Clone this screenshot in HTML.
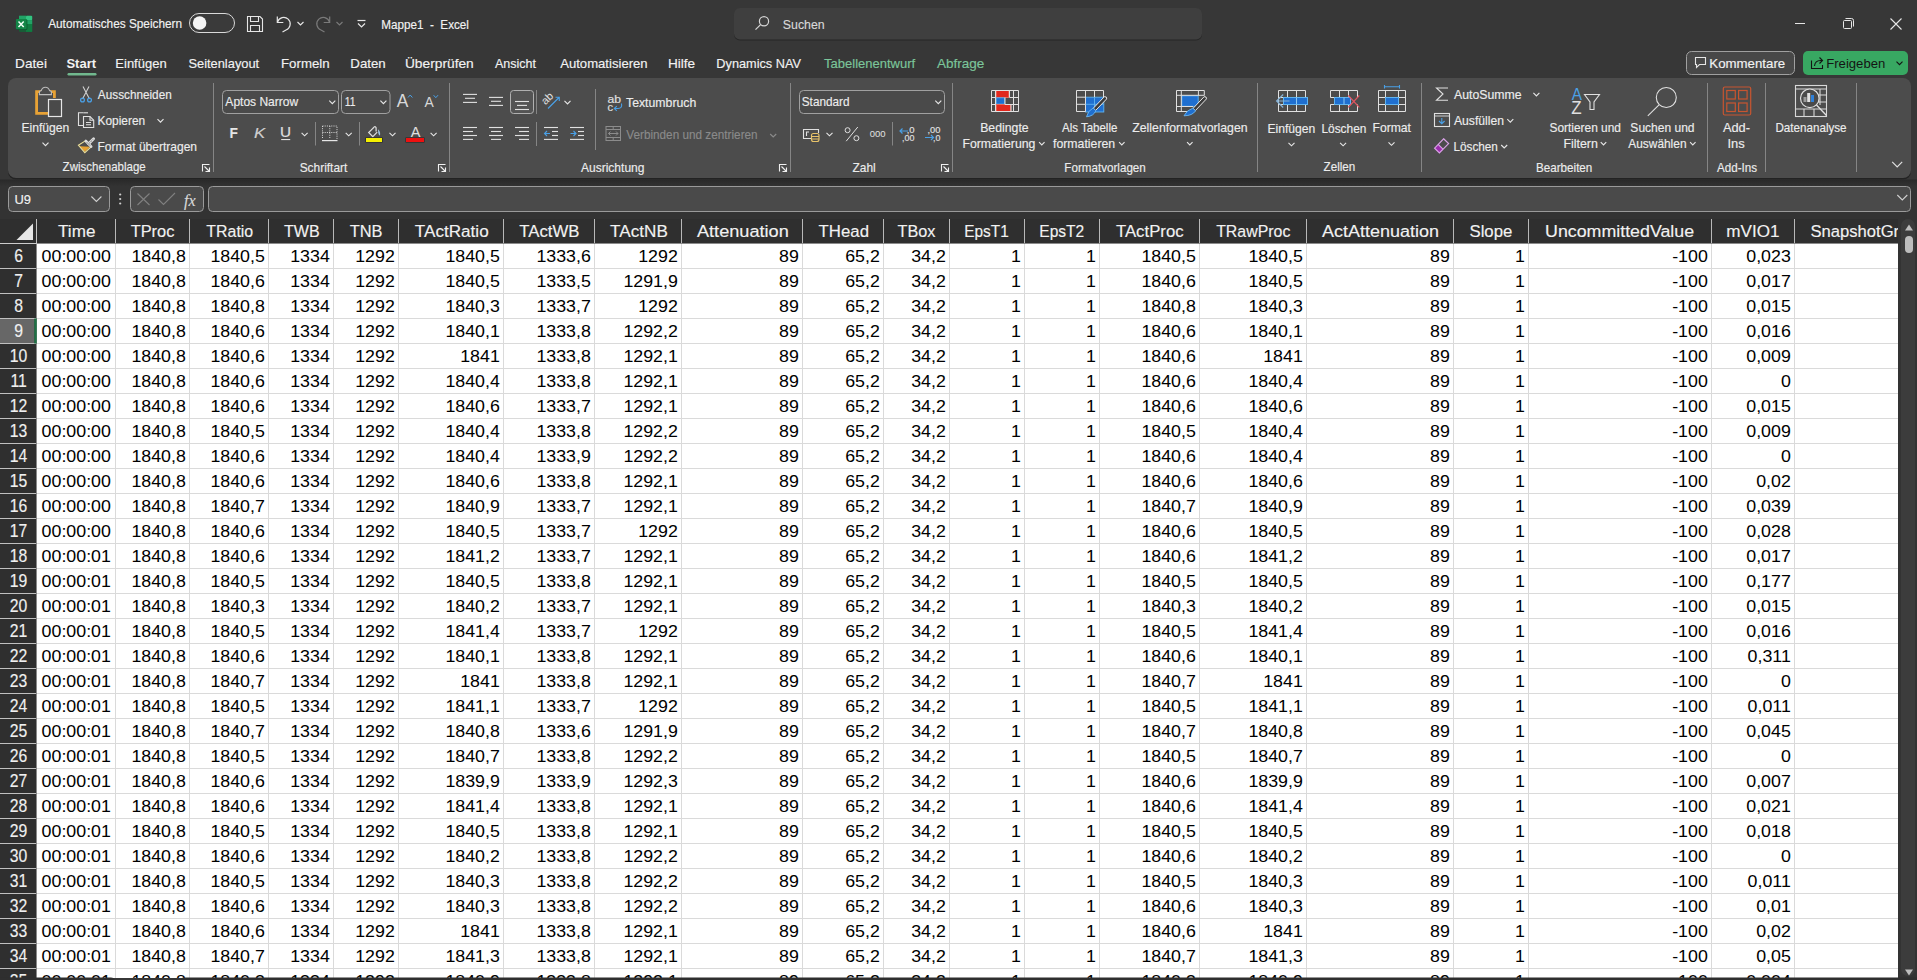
<!DOCTYPE html>
<html><head><meta charset="utf-8"><title>Mappe1 - Excel</title>
<style>
html,body{margin:0;padding:0;background:#373737;overflow:hidden;}
body{width:1917px;height:980px;position:relative;font-family:'Liberation Sans', sans-serif;}
svg{position:absolute;left:0;top:0;display:block;font-family:'Liberation Sans', sans-serif;}
</style></head><body>
<svg width="1917" height="980" viewBox="0 0 1917 980">
<defs><clipPath id="gclip"><rect x="0" y="219" width="1898" height="759"/></clipPath></defs>
<rect x="0" y="0" width="1917" height="980" fill="#373737" />
<rect x="8" y="79.5" width="1903" height="100" fill="#232323" rx="8"/>
<rect x="8" y="78" width="1903" height="100" fill="#4c4c4c" rx="8"/>
<defs><linearGradient id="fbg" x1="0" y1="0" x2="0" y2="1"><stop offset="0" stop-color="#292929"/><stop offset="1" stop-color="#333333"/></linearGradient></defs>
<rect x="0" y="180" width="1917" height="39" fill="#333333" />
<rect x="0" y="179.5" width="1917" height="7" fill="url(#fbg)" />
<rect x="0" y="219" width="1898" height="25" fill="#2f2f2f" />
<rect x="0" y="244" width="37" height="736" fill="#2f2f2f" />
<rect x="37" y="244" width="1861" height="734" fill="#ffffff" />
<rect x="1898" y="219" width="19" height="759" fill="#333333" />
<rect x="1901" y="219" width="14" height="757" fill="#3c3c3c" rx="7"/>
<path d="M1905 230.5 L1909 224.5 L1913 230.5 Z" fill="#bdbdbd"/>
<rect x="1905" y="236" width="8" height="17" fill="#bdbdbd" rx="4"/>
<path d="M1905 969.5 L1909 975.5 L1913 969.5 Z" fill="#bdbdbd"/>
<g><rect x="19" y="15.7" width="13.2" height="16.2" rx="1.2" fill="#185c37"/><rect x="19" y="15.7" width="7.2" height="4.5" fill="#21a366"/><rect x="26" y="15.7" width="6.2" height="4.5" rx="1" fill="#33c481"/><rect x="26" y="20.1" width="6.2" height="4" fill="#21a366"/><rect x="26" y="24" width="6.2" height="7.9" fill="#107c41"/><rect x="16.3" y="19.5" width="11" height="10.3" rx="1" fill="#0a4f29"/><rect x="15.9" y="19.1" width="10.8" height="10.1" rx="1" fill="#138547"/><path d="M18.5 21.4 L23.7 26.9 M23.7 21.4 L18.5 26.9" stroke="#f4fff8" stroke-width="1.5"/></g>
<text transform="matrix(0.91 0 0 1 48.17 27.9)" font-size="13" fill="#f2f2f2" stroke="#f2f2f2" stroke-width="0.15" >Automatisches Speichern</text>
<rect x="189.5" y="13.5" width="45" height="19" rx="9.5" fill="#3a3a3a" stroke="#d9d9d9" stroke-width="1"/>
<circle cx="199.6" cy="23" r="6.8" fill="#f4f4f4"/>
<g fill="none" stroke="#e6e6e6" stroke-width="1.1"><path d="M247.5 16.5 H260 L262.5 19 V31.5 H247.5 Z"/><path d="M250.5 16.5 V21.5 H258.5 V16.5"/><path d="M250.5 31.5 V25.5 H259.5 V31.5"/></g>
<g fill="none" stroke="#e6e6e6" stroke-width="1.2"><path d="M277.5 22 A6.5 6.5 0 1 1 286 30 L282.5 32"/><path d="M277.3 16.5 V22.5 H283.3"/></g>
<path d="M297.5 22 L300.5 25 L303.5 22" fill="none" stroke="#e6e6e6" stroke-width="1.15"/>
<g fill="none" stroke="#7a7a7a" stroke-width="1.2"><path d="M329.5 22 A6.5 6.5 0 1 0 321 30 L324.5 32"/><path d="M329.7 16.5 V22.5 H323.7"/></g>
<path d="M336.5 22 L339.5 25 L342.5 22" fill="none" stroke="#7a7a7a" stroke-width="1.15"/>
<g fill="none" stroke="#e6e6e6" stroke-width="1.2"><path d="M357.5 20.5 H365.5"/><path d="M358 23.5 L361.5 27 L365 23.5"/></g>
<text transform="matrix(0.9 0 0 1 381.23 28.5)" font-size="13" fill="#f2f2f2" stroke="#f2f2f2" stroke-width="0.15" xml:space="preserve">Mappe1  -  Excel</text>
<rect x="734" y="9.5" width="468" height="31" fill="#262626" rx="6"/>
<rect x="734" y="8" width="468" height="31.5" fill="#3f3f3f" rx="6"/>
<g fill="none" stroke="#d6d6d6" stroke-width="1.2"><circle cx="764" cy="21.2" r="4.6"/><path d="M760.6 24.6 L755.5 29.7"/></g>
<text transform="matrix(0.95 0 0 1 782.85 28.5)" font-size="13" fill="#d8d8d8" stroke="#d8d8d8" stroke-width="0.15" >Suchen</text>
<rect x="1795" y="23" width="10" height="1" fill="#e6e6e6" />
<g fill="none" stroke="#e6e6e6" stroke-width="1"><rect x="1843.5" y="20.5" width="8" height="8" rx="1"/><path d="M1845.5 18.5 H1851.5 Q1853.5 18.5 1853.5 20.5 V26.5"/></g>
<path d="M1890.5 18.5 L1901.5 29.5 M1901.5 18.5 L1890.5 29.5" stroke="#e6e6e6" stroke-width="1.1"/>
<text transform="matrix(1.05 0 0 1 15.08 68)" font-size="13" fill="#f2f2f2" stroke="#f2f2f2" stroke-width="0.15" >Datei</text>
<text transform="matrix(1 0 0 1 66.41 68)" font-size="13" fill="#f2f2f2" font-weight="bold" >Start</text>
<text transform="matrix(1 0 0 1 115.33 68)" font-size="13" fill="#f2f2f2" stroke="#f2f2f2" stroke-width="0.15" >Einfügen</text>
<text transform="matrix(0.99 0 0 1 188.42 68)" font-size="13" fill="#f2f2f2" stroke="#f2f2f2" stroke-width="0.15" >Seitenlayout</text>
<text transform="matrix(1.02 0 0 1 281 68)" font-size="13" fill="#f2f2f2" stroke="#f2f2f2" stroke-width="0.15" >Formeln</text>
<text transform="matrix(1.02 0 0 1 350.31 68)" font-size="13" fill="#f2f2f2" stroke="#f2f2f2" stroke-width="0.15" >Daten</text>
<text transform="matrix(1.06 0 0 1 404.93 68)" font-size="13" fill="#f2f2f2" stroke="#f2f2f2" stroke-width="0.15" >Überprüfen</text>
<text transform="matrix(0.96 0 0 1 494.97 68)" font-size="13" fill="#f2f2f2" stroke="#f2f2f2" stroke-width="0.15" >Ansicht</text>
<text transform="matrix(1.01 0 0 1 560.17 68)" font-size="13" fill="#f2f2f2" stroke="#f2f2f2" stroke-width="0.15" >Automatisieren</text>
<text transform="matrix(1.05 0 0 1 667.88 68)" font-size="13" fill="#f2f2f2" stroke="#f2f2f2" stroke-width="0.15" >Hilfe</text>
<text transform="matrix(0.98 0 0 1 716.35 68)" font-size="13" fill="#f2f2f2" stroke="#f2f2f2" stroke-width="0.15" >Dynamics NAV</text>
<text transform="matrix(1 0 0 1 824.11 68)" font-size="13" fill="#7cc59a" stroke="#7cc59a" stroke-width="0.15" >Tabellenentwurf</text>
<text transform="matrix(1.04 0 0 1 936.97 68)" font-size="13" fill="#7cc59a" stroke="#7cc59a" stroke-width="0.15" >Abfrage</text>
<rect x="67.5" y="73" width="29" height="2.5" fill="#71b88e" rx="1.2"/>
<rect x="1686.5" y="51.5" width="108" height="23" rx="5" fill="#484848" stroke="#a0a0a0"/>
<path d="M1695.5 57.5 H1705.5 V64.5 H1699.5 L1696.5 67.5 V64.5 H1695.5 Z" fill="none" stroke="#e6e6e6" stroke-width="1.1"/>
<text transform="matrix(1.02 0 0 1 1709.3 68.3)" font-size="13" fill="#f2f2f2" stroke="#f2f2f2" stroke-width="0.15" >Kommentare</text>
<rect x="1803" y="51" width="105" height="24" rx="5" fill="#38a862"/>
<g fill="none" stroke="#141414" stroke-width="1.1"><path d="M1811.5 60.5 V68.5 H1822.5 V65"/><path d="M1814.5 66 Q1815 60.5 1820.5 60.5 H1822 M1819.5 57.5 L1822.5 60.5 L1819.5 63.5"/></g>
<text transform="matrix(1.01 0 0 1 1826.22 68.3)" font-size="13" fill="#141414" >Freigeben</text>
<path d="M1896.5 61.7 L1899.5 64.7 L1902.5 61.7" fill="none" stroke="#141414" stroke-width="1.15"/>
<rect x="213" y="83" width="1" height="89" fill="#858585" />
<rect x="449" y="83" width="1" height="89" fill="#858585" />
<rect x="790" y="83" width="1" height="89" fill="#858585" />
<rect x="952" y="83" width="1" height="89" fill="#858585" />
<rect x="1257" y="83" width="1" height="89" fill="#858585" />
<rect x="1421" y="83" width="1" height="89" fill="#858585" />
<rect x="1707" y="83" width="1" height="89" fill="#858585" />
<rect x="1765" y="83" width="1" height="89" fill="#858585" />
<rect x="1856" y="83" width="1" height="89" fill="#858585" />
<g fill="none"><path d="M54.4 98 V91.6 H36.6 V113.4 H48" stroke="#e8a235" stroke-width="2.8"/><path d="M39.4 94.6 H51.4 V91.6 L49.6 90.6 Q48.6 87.2 45.4 87.2 Q42.2 87.2 41.2 90.6 L39.4 91.6 Z" fill="#4c4c4c" stroke="#bdbdbd" stroke-width="1.1"/><rect x="48.5" y="99.5" width="13" height="17" fill="#4a4a4a" stroke="#e6e6e6" stroke-width="1.2"/></g>
<text transform="matrix(0.95 0 0 1 21.4 132.4)" font-size="12.8" fill="#ececec" stroke="#ececec" stroke-width="0.15" >Einfügen</text>
<path d="M42.5 142.7 L45.5 145.7 L48.5 142.7" fill="none" stroke="#e6e6e6" stroke-width="1.15"/>
<g fill="none" stroke-width="1.1"><path d="M83 86.5 L89.5 99 M89 86.5 L82.5 99" stroke="#d0d0d0"/><circle cx="82.5" cy="100" r="1.9" stroke="#4aa0e6" stroke-width="1.3"/><circle cx="89.5" cy="100" r="1.9" stroke="#4aa0e6" stroke-width="1.3"/></g>
<text transform="matrix(0.92 0 0 1 97.87 99)" font-size="12.8" fill="#ececec" stroke="#ececec" stroke-width="0.15" >Ausschneiden</text>
<g fill="none" stroke="#e0e0e0" stroke-width="1.1"><path d="M83.5 112.8 H78.5 V125.5 H83.5"/><path d="M83.5 112.8 H88"/><path d="M83.5 116.5 H90 L93.7 120.2 V127.5 H83.5 Z"/><path d="M90 116.5 V120.2 H93.7"/><path d="M86 122.5 H91 M86 124.8 H91"/></g>
<text transform="matrix(0.93 0 0 1 97.52 125)" font-size="12.8" fill="#ececec" stroke="#ececec" stroke-width="0.15" >Kopieren</text>
<path d="M157.5 119.1 L160.5 122.1 L163.5 119.1" fill="none" stroke="#e6e6e6" stroke-width="1.15"/>
<g><path d="M79.5 146.3 L90 146.8 L84.8 151.8 Z" fill="#e6a030"/><path d="M78.4 145.2 L85.7 140.6 L91.3 146.6 L84.8 152.6 Z" fill="none" stroke="#ecdf98" stroke-width="1.1"/><path d="M85.8 141 L91.2 146.6" stroke="#dcdcdc" stroke-width="2.6" stroke-linecap="round"/><path d="M88.6 143.8 L93.6 138.8" stroke="#dcdcdc" stroke-width="2.8" stroke-linecap="round"/><path d="M86.5 142 L90.4 145.9 M89.2 143.2 L93 139.4" stroke="#3a3a3a" stroke-width="0.8" stroke-dasharray="0.9 0.7"/></g>
<text transform="matrix(0.94 0 0 1 97.51 150.8)" font-size="12.8" fill="#ececec" stroke="#ececec" stroke-width="0.15" >Format übertragen</text>
<text transform="matrix(0.9 0 0 1 62.62 171.4)" font-size="12.8" fill="#ececec" stroke="#ececec" stroke-width="0.15" >Zwischenablage</text>
<path d="M202.5 171.5 V164.5 H209.5" fill="none" stroke="#f0f0f0" stroke-width="1.1"/>
<path d="M204.5 166.5 L209.5 171.5 M209.5 167.5 V171.5 H205.5" fill="none" stroke="#f0f0f0" stroke-width="1.1"/>
<rect x="222.5" y="90.5" width="116" height="23" rx="4" fill="#4a4a4a" stroke="#a0a0a0"/>
<text transform="matrix(0.94 0 0 1 225.37 106)" font-size="12.8" fill="#ececec" stroke="#ececec" stroke-width="0.15" >Aptos Narrow</text>
<path d="M329.3 100.7 L332.3 103.7 L335.3 100.7" fill="none" stroke="#e6e6e6" stroke-width="1.15"/>
<rect x="341.5" y="90.5" width="48.5" height="23" rx="4" fill="#4a4a4a" stroke="#a0a0a0"/>
<text transform="matrix(0.81 0 0 1 344.72 106)" font-size="12.8" fill="#ececec" stroke="#ececec" stroke-width="0.15" >11</text>
<path d="M380.4 100.7 L383.4 103.7 L386.4 100.7" fill="none" stroke="#e6e6e6" stroke-width="1.15"/>
<text transform="matrix(0.94 0 0 1 396.66 107.4)" font-size="18.5" fill="#d8d8d8" >A</text>
<path d="M408 97.5 L410.2 95 L412.4 97.5" fill="none" stroke="#4aa0e6" stroke-width="1"/>
<text transform="matrix(0.94 0 0 1 424.47 107.4)" font-size="14.8" fill="#d8d8d8" >A</text>
<path d="M433.6 95.2 L435.8 97.7 L438 95.2" fill="none" stroke="#4aa0e6" stroke-width="1"/>
<text transform="matrix(1 0 0 1 229.47 137.6)" font-size="13.8" fill="#e6e6e6" font-weight="bold" >F</text>
<text transform="matrix(1.22 0 0 1 254.02 137.6)" font-size="13.8" fill="#d0d0d0" stroke="#d0d0d0" stroke-width="0.15" font-style="italic">K</text>
<text transform="matrix(1.11 0 0 1 280.11 137.4)" font-size="13.8" fill="#e0e0e0" stroke="#e0e0e0" stroke-width="0.15" >U</text>
<rect x="281.2" y="139" width="9" height="1.1" fill="#e0e0e0" />
<path d="M301.6 132.8 L304.6 135.8 L307.6 132.8" fill="none" stroke="#e6e6e6" stroke-width="1.15"/>
<rect x="315" y="122" width="1" height="23.5" fill="#858585" />
<g fill="none" stroke="#d8d8d8" stroke-width="1" stroke-dasharray="1 1.2"><path d="M322.5 126 H337 V139 M322.5 126 V139 M329.8 126 V139 M322.5 132.5 H337"/></g>
<rect x="322" y="140" width="15.5" height="1.2" fill="#e6e6e6" />
<path d="M345.7 132.8 L348.7 135.8 L351.7 132.8" fill="none" stroke="#e6e6e6" stroke-width="1.15"/>
<rect x="359" y="122" width="1" height="23.5" fill="#858585" />
<g fill="none" stroke="#e0e0e0" stroke-width="1.2"><path d="M373.6 127.6 L368.7 132.5 L372.8 136.6 L377.2 132.2"/><path d="M373.2 128 Q375.2 125.3 376.1 127.8 V131.6"/></g>
<path d="M378.2 129.3 Q381.2 132.8 379.7 135.8 Q377.6 133.6 378.2 129.3 Z" fill="#9cc4e4"/>
<rect x="365.4" y="137.5" width="17.2" height="5" fill="#222" />
<rect x="366" y="138" width="16" height="4" fill="#f4f000" />
<path d="M389.5 132.8 L392.5 135.8 L395.5 132.8" fill="none" stroke="#e6e6e6" stroke-width="1.15"/>
<text transform="matrix(1 0 0 1 410.76 137.4)" font-size="14.5" fill="#e0e0e0" >A</text>
<rect x="405.5" y="137.5" width="19" height="5" fill="#222" />
<rect x="406" y="138" width="18" height="4" fill="#ee1010" />
<path d="M430.6 132.8 L433.6 135.8 L436.6 132.8" fill="none" stroke="#e6e6e6" stroke-width="1.15"/>
<text transform="matrix(0.93 0 0 1 299.67 172)" font-size="12.8" fill="#ececec" stroke="#ececec" stroke-width="0.15" >Schriftart</text>
<path d="M438.5 171.5 V164.5 H445.5" fill="none" stroke="#f0f0f0" stroke-width="1.1"/>
<path d="M440.5 166.5 L445.5 171.5 M445.5 167.5 V171.5 H441.5" fill="none" stroke="#f0f0f0" stroke-width="1.1"/>
<rect x="463" y="93.85" width="14" height="1.1" fill="#e0e0e0" />
<rect x="465" y="97.75" width="10" height="1.1" fill="#e0e0e0" />
<rect x="463" y="101.85" width="14" height="1.1" fill="#e0e0e0" />
<rect x="489" y="96.85" width="14" height="1.1" fill="#e0e0e0" />
<rect x="491" y="100.75" width="10" height="1.1" fill="#e0e0e0" />
<rect x="489" y="104.85" width="14" height="1.1" fill="#e0e0e0" />
<rect x="510.5" y="90.5" width="23" height="23" rx="3" fill="#545454" stroke="#b0b0b0" stroke-width="1"/>
<rect x="515" y="100.95" width="14" height="1.1" fill="#e0e0e0" />
<rect x="517" y="104.85" width="10" height="1.1" fill="#e0e0e0" />
<rect x="515" y="108.95" width="14" height="1.1" fill="#e0e0e0" />
<rect x="536" y="90" width="1" height="24" fill="#858585" />
<g fill="none" stroke-width="1.1"><path d="M548 108.5 L559 97.5 M555.5 97.2 H559.3 V101" stroke="#4aa0e6"/></g>
<text transform="matrix(0.707 -0.707 0.707 0.707 545.6 105.2)" font-size="10.8" fill="#e0e0e0">ab</text>
<path d="M564.5 100.9 L567.5 103.9 L570.5 100.9" fill="none" stroke="#e6e6e6" stroke-width="1.15"/>
<rect x="463" y="126.95" width="14" height="1.1" fill="#e0e0e0" />
<rect x="463" y="130.95" width="10" height="1.1" fill="#e0e0e0" />
<rect x="463" y="134.95" width="14" height="1.1" fill="#e0e0e0" />
<rect x="463" y="138.85" width="10" height="1.1" fill="#e0e0e0" />
<rect x="489" y="126.95" width="14" height="1.1" fill="#e0e0e0" />
<rect x="491" y="130.95" width="10" height="1.1" fill="#e0e0e0" />
<rect x="489" y="134.95" width="14" height="1.1" fill="#e0e0e0" />
<rect x="491" y="138.85" width="10" height="1.1" fill="#e0e0e0" />
<rect x="515" y="126.95" width="14" height="1.1" fill="#e0e0e0" />
<rect x="519" y="130.95" width="10" height="1.1" fill="#e0e0e0" />
<rect x="515" y="134.95" width="14" height="1.1" fill="#e0e0e0" />
<rect x="519" y="138.85" width="10" height="1.1" fill="#e0e0e0" />
<rect x="536" y="122" width="1" height="24" fill="#858585" />
<rect x="544" y="126.95" width="14" height="1.1" fill="#e0e0e0" />
<rect x="552" y="130.95" width="6" height="1.1" fill="#e0e0e0" />
<rect x="552" y="134.95" width="6" height="1.1" fill="#e0e0e0" />
<rect x="544" y="138.85" width="14" height="1.1" fill="#e0e0e0" />
<path d="M550 133.5 H544.5 M547 131 L544.5 133.5 L547 136" fill="none" stroke="#4aa0e6" stroke-width="1.1"/>
<rect x="570" y="126.95" width="14" height="1.1" fill="#e0e0e0" />
<rect x="578" y="130.95" width="6" height="1.1" fill="#e0e0e0" />
<rect x="578" y="134.95" width="6" height="1.1" fill="#e0e0e0" />
<rect x="570" y="138.85" width="14" height="1.1" fill="#e0e0e0" />
<path d="M570.5 133.5 H576 M573.5 131 L576 133.5 L573.5 136" fill="none" stroke="#4aa0e6" stroke-width="1.1"/>
<rect x="595" y="89" width="1" height="61" fill="#858585" />
<text transform="matrix(1.11 0 0 1 607.48 102.8)" font-size="11" fill="#e0e0e0" stroke="#e0e0e0" stroke-width="0.15" >ab</text>
<text transform="matrix(1.01 0 0 1 607.53 111.2)" font-size="11" fill="#e0e0e0" stroke="#e0e0e0" stroke-width="0.15" >c</text>
<path d="M621.5 103.5 Q622.5 108.5 618 108.5 H614.5 M616.8 106.2 L614.3 108.5 L616.8 110.8" fill="none" stroke="#4aa0e6" stroke-width="1.1"/>
<text transform="matrix(0.96 0 0 1 626.02 107.4)" font-size="12.8" fill="#ececec" stroke="#ececec" stroke-width="0.15" >Textumbruch</text>
<g fill="none" stroke="#8c8c8c" stroke-width="1"><rect x="606" y="126.5" width="14.5" height="14"/><path d="M606 129.5 H620.5 M606 137.5 H620.5 M613.2 126.5 V129.5 M613.2 137.5 V140.5 M608.5 133.5 H618 M610.5 131.5 L608.5 133.5 L610.5 135.5 M616 131.5 L618 133.5 L616 135.5"/></g>
<text transform="matrix(0.92 0 0 1 626.24 138.8)" font-size="12.8" fill="#8a8a8a" stroke="#8a8a8a" stroke-width="0.15" >Verbinden und zentrieren</text>
<path d="M770.2 134 L773.2 137 L776.2 134" fill="none" stroke="#8a8a8a" stroke-width="1.15"/>
<text transform="matrix(0.94 0 0 1 580.97 171.8)" font-size="12.8" fill="#ececec" stroke="#ececec" stroke-width="0.15" >Ausrichtung</text>
<path d="M779.5 171.5 V164.5 H786.5" fill="none" stroke="#f0f0f0" stroke-width="1.1"/>
<path d="M781.5 166.5 L786.5 171.5 M786.5 167.5 V171.5 H782.5" fill="none" stroke="#f0f0f0" stroke-width="1.1"/>
<rect x="799.5" y="90.5" width="145" height="23" rx="4" fill="#4a4a4a" stroke="#a0a0a0"/>
<text transform="matrix(0.92 0 0 1 801.77 106)" font-size="12.8" fill="#ececec" stroke="#ececec" stroke-width="0.15" >Standard</text>
<path d="M935.3 100.7 L938.3 103.7 L941.3 100.7" fill="none" stroke="#e6e6e6" stroke-width="1.15"/>
<g fill="none" stroke="#e0e0e0" stroke-width="1.1"><path d="M811 138.5 H803.5 V129.5 H818.5 V133"/><path d="M806.5 136 V132 H809"/></g>
<g><rect x="811.5" y="133.5" width="7.5" height="8" rx="2" fill="#4a4a4a" stroke="#e8c36a" stroke-width="1.1"/><path d="M811.5 136.5 H819 M811.5 139 H819" stroke="#e8c36a" stroke-width="1"/></g>
<path d="M826.5 132.8 L829.5 135.8 L832.5 132.8" fill="none" stroke="#e6e6e6" stroke-width="1.15"/>
<g fill="none" stroke="#e0e0e0" stroke-width="1"><circle cx="847.6" cy="130.2" r="2.5"/><circle cx="856.4" cy="138.2" r="2.5"/><path d="M857.8 127 L846.2 141.2"/></g>
<text transform="matrix(1 0 0 1 869.64 136.8)" font-size="9.5" fill="#e0e0e0" >000</text>
<rect x="892" y="122" width="1" height="23.5" fill="#858585" />
<text transform="matrix(1 0 0 1 906.64 133)" font-size="9.5" fill="#e0e0e0" stroke="#e0e0e0" stroke-width="0.15" >,0</text>
<text transform="matrix(0.94 0 0 1 902.09 141.1)" font-size="9.5" fill="#e0e0e0" stroke="#e0e0e0" stroke-width="0.15" >,00</text>
<path d="M908 131 H900 M902.5 128.5 L900 131 L902.5 133.5" fill="none" stroke="#4aa0e6" stroke-width="1.2"/>
<text transform="matrix(0.98 0 0 1 927.47 133)" font-size="9.5" fill="#e0e0e0" stroke="#e0e0e0" stroke-width="0.15" >,00</text>
<text transform="matrix(0.93 0 0 1 933.01 141.1)" font-size="9.5" fill="#e0e0e0" stroke="#e0e0e0" stroke-width="0.15" >,0</text>
<path d="M925 137.5 H933.5 M931 135 L933.5 137.5 L931 140" fill="none" stroke="#4aa0e6" stroke-width="1.2"/>
<text transform="matrix(0.93 0 0 1 852.51 171.8)" font-size="12.8" fill="#ececec" stroke="#ececec" stroke-width="0.15" >Zahl</text>
<path d="M941.5 171.5 V164.5 H948.5" fill="none" stroke="#f0f0f0" stroke-width="1.1"/>
<path d="M943.5 166.5 L948.5 171.5 M948.5 167.5 V171.5 H944.5" fill="none" stroke="#f0f0f0" stroke-width="1.1"/>
<g><rect x="996.3" y="90.5" width="12.5" height="7" fill="#e2281e" stroke="#ff7060" stroke-width="0.8"/><rect x="996.3" y="97.8" width="8.3" height="6.3" fill="#1f6fd0" stroke="#5fb4f0" stroke-width="0.8"/><rect x="996.3" y="104.6" width="14.5" height="7" fill="#e2281e" stroke="#ff7060" stroke-width="0.8"/><path d="M991.5 90.5 H1018.5 V111.5 H991.5 Z M995.5 90.5 V111.5 M1009.5 90.5 V97.5 M1013.5 90.5 V111.5 M991.5 97.5 H995.5 M1009.5 97.5 H1018.5 M991.5 104.5 H995.5 M1005 104.5 H1018.5 M1005 97.5 V104.5 M1011 104.5 V111.5" fill="none" stroke="#e0e0e0" stroke-width="1"/></g>
<text transform="matrix(0.96 0 0 1 980.18 132)" font-size="12.8" fill="#ececec" stroke="#ececec" stroke-width="0.15" >Bedingte</text>
<text transform="matrix(0.96 0 0 1 962.39 147.6)" font-size="12.8" fill="#ececec" stroke="#ececec" stroke-width="0.15" >Formatierung</text>
<path d="M1039.05 142.1 L1041.8 144.9 L1044.55 142.1" fill="none" stroke="#e6e6e6" stroke-width="1.15"/>
<g><rect x="1085.5" y="97.2" width="18.3" height="14.8" fill="#1f6fd0" stroke="#5fb4f0" stroke-width="0.9"/><path d="M1076.5 90.5 H1103.5 V97.2 M1076.5 90.5 V111.5 H1085.5 M1085.5 90.5 V111.5 M1094.5 90.5 V97.2 M1076.5 97.2 H1085.5 M1076.5 104.3 H1085.5" fill="none" stroke="#e0e0e0" stroke-width="1"/><path d="M1094.5 97.2 V112 M1085.5 104.3 H1103.8" stroke="#5fb4f0" stroke-width="0.9"/></g>
<path d="M1104.34 96.69 L1093.34 108.19 L1095.66 110.41 L1106.66 98.91 Q1107.02 96.21 1104.34 96.69 Z" fill="#3a3a3a" stroke="#e6e6e6" stroke-width="1"/>
<path d="M1093.11 107.97 Q1087.96 110.62 1086.5 116.8 Q1093.74 116.15 1095.89 110.63 Z" fill="#1f6fd0" stroke="#6ab8f2" stroke-width="0.9"/>
<text transform="matrix(0.9 0 0 1 1061.97 132)" font-size="12.8" fill="#ececec" stroke="#ececec" stroke-width="0.15" >Als Tabelle</text>
<text transform="matrix(0.96 0 0 1 1053.05 147.6)" font-size="12.8" fill="#ececec" stroke="#ececec" stroke-width="0.15" >formatieren</text>
<path d="M1119.05 142.1 L1121.8 144.9 L1124.55 142.1" fill="none" stroke="#e6e6e6" stroke-width="1.15"/>
<g><rect x="1181.8" y="95.8" width="16.4" height="10.5" fill="#1f6fd0" stroke="#5fb4f0" stroke-width="0.9"/><path d="M1176.5 90.5 H1204.3 V95.5 M1176.5 90.5 V111.5 H1193 M1181.3 90.5 V111.5 M1198.4 90.5 V95.5 M1176.5 95.3 H1204.3 M1176.5 106.5 H1193" fill="none" stroke="#e0e0e0" stroke-width="1"/></g>
<path d="M1204.14 96.7 L1193.04 108.4 L1195.36 110.6 L1206.46 98.9 Q1206.81 96.2 1204.14 96.7 Z" fill="#3a3a3a" stroke="#e6e6e6" stroke-width="1"/>
<path d="M1192.81 108.18 Q1186.55 110.23 1184 115.8 Q1192.35 115.73 1195.59 110.82 Z" fill="#1f6fd0" stroke="#6ab8f2" stroke-width="0.9"/>
<text transform="matrix(0.96 0 0 1 1132.3 132)" font-size="12.8" fill="#ececec" stroke="#ececec" stroke-width="0.15" >Zellenformatvorlagen</text>
<path d="M1187.05 142.1 L1189.8 144.9 L1192.55 142.1" fill="none" stroke="#e6e6e6" stroke-width="1.15"/>
<text transform="matrix(0.91 0 0 1 1064.34 171.8)" font-size="12.8" fill="#ececec" stroke="#ececec" stroke-width="0.15" >Formatvorlagen</text>
<g><path d="M1278.5 90.5 H1305.5 V111.5 H1278.5 Z M1287.5 90.5 V111.5 M1296.5 90.5 V111.5 M1278.5 97.5 H1305.5 M1278.5 104.5 H1305.5" fill="none" stroke="#e0e0e0" stroke-width="1"/><rect x="1283.5" y="97.5" width="24" height="7" fill="#1f6fd0" stroke="#5fb4f0" stroke-width="1"/><path d="M1296.5 97.5 V104.5" stroke="#8ccaf5" stroke-width="1"/><path d="M1277.2 101 H1289.5 M1283.2 94.5 L1276.6 101 L1283.2 107.5" fill="none" stroke="#86b2d6" stroke-width="1.2"/></g>
<text transform="matrix(0.95 0 0 1 1267.4 132.9)" font-size="12.8" fill="#ececec" stroke="#ececec" stroke-width="0.15" >Einfügen</text>
<path d="M1288.5 142.8 L1291.5 145.8 L1294.5 142.8" fill="none" stroke="#e6e6e6" stroke-width="1.15"/>
<g><path d="M1334 97.5 H1330.5 V90.5 H1357.5 V97.5 M1334 104.5 H1330.5 V111.5 H1357.5 V104.5 M1339.5 90.5 V97.5 M1348.5 90.5 V97.5 M1339.5 104.5 V111.5 M1348.5 104.5 V111.5" fill="none" stroke="#e0e0e0" stroke-width="1"/><rect x="1334.5" y="97.5" width="16" height="7" fill="#1f6fd0" stroke="#5fb4f0" stroke-width="1"/><path d="M1344 97.5 V104.5" stroke="#8ccaf5" stroke-width="1"/><path d="M1348.3 95.5 L1359.3 107.3 M1359.3 95.5 L1348.3 107.3" stroke="#e25560" stroke-width="1.2"/></g>
<text transform="matrix(0.93 0 0 1 1321.42 132.9)" font-size="12.8" fill="#ececec" stroke="#ececec" stroke-width="0.15" >Löschen</text>
<path d="M1340.1 142.8 L1343.1 145.8 L1346.1 142.8" fill="none" stroke="#e6e6e6" stroke-width="1.15"/>
<g><path d="M1378.5 90.5 H1405.5 V111.5 H1378.5 Z M1385.5 90.5 V111.5 M1398.5 90.5 V111.5 M1378.5 97.5 H1405.5 M1378.5 104.5 H1405.5" fill="none" stroke="#e0e0e0" stroke-width="1"/><rect x="1385.5" y="97.5" width="13" height="7" fill="#1f6fd0" stroke="#5fb4f0" stroke-width="1"/><path d="M1384.5 86.7 H1399.5 M1384.5 85 V88.4 M1399.5 85 V88.4" stroke="#4aa0e6" stroke-width="1.1"/></g>
<text transform="matrix(0.95 0 0 1 1372.49 131.8)" font-size="12.8" fill="#ececec" stroke="#ececec" stroke-width="0.15" >Format</text>
<path d="M1388.5 142.3 L1391.5 145.3 L1394.5 142.3" fill="none" stroke="#e6e6e6" stroke-width="1.15"/>
<text transform="matrix(0.91 0 0 1 1323.62 171.3)" font-size="12.8" fill="#ececec" stroke="#ececec" stroke-width="0.15" >Zellen</text>
<path d="M1448 88 H1436.5 L1443 94 L1436.5 100.3 H1448" fill="none" stroke="#e0e0e0" stroke-width="1.1"/>
<text transform="matrix(0.96 0 0 1 1453.97 98.9)" font-size="12.8" fill="#ececec" stroke="#ececec" stroke-width="0.15" >AutoSumme</text>
<path d="M1533.4 92.9 L1536.4 95.9 L1539.4 92.9" fill="none" stroke="#e6e6e6" stroke-width="1.15"/>
<g fill="none"><rect x="1434.5" y="113.5" width="15" height="13" stroke="#e0e0e0" stroke-width="1.1"/><path d="M1434.5 116 H1449.5" stroke="#e0e0e0" stroke-width="0.9"/><path d="M1441.8 118 V123.5 M1439 121 L1441.8 123.7 L1444.6 121" stroke="#4aa0e6" stroke-width="1.1"/></g>
<text transform="matrix(0.95 0 0 1 1453.97 124.7)" font-size="12.8" fill="#ececec" stroke="#ececec" stroke-width="0.15" >Ausfüllen</text>
<path d="M1507.3 119.1 L1510.3 122.1 L1513.3 119.1" fill="none" stroke="#e6e6e6" stroke-width="1.15"/>
<g><path d="M1434.6 148.2 L1438.4 144.6 L1443.2 149.4 L1439.4 153 Z" fill="#9c2cae"/><path d="M1443.6 138.8 L1448.6 143.6 L1439.4 153 L1434.6 148.2 Z M1438.4 144.6 L1443.2 149.4" fill="none" stroke="#d9a2e6" stroke-width="1.2"/></g>
<text transform="matrix(0.92 0 0 1 1453.42 150.7)" font-size="12.8" fill="#ececec" stroke="#ececec" stroke-width="0.15" >Löschen</text>
<path d="M1501.2 145 L1504.2 148 L1507.2 145" fill="none" stroke="#e6e6e6" stroke-width="1.15"/>
<text transform="matrix(0.93 0 0 1 1571.66 99.7)" font-size="16.5" fill="#4aa0e6" >A</text>
<text transform="matrix(0.97 0 0 1 1571.35 114.3)" font-size="17.5" fill="#e0e0e0" >Z</text>
<path d="M1584.5 94.5 H1599.5 L1594 102 V109.5 H1590 V102 Z" fill="none" stroke="#e0e0e0" stroke-width="1.1"/>
<text transform="matrix(0.93 0 0 1 1549.46 132.2)" font-size="12.8" fill="#ececec" stroke="#ececec" stroke-width="0.15" >Sortieren und</text>
<text transform="matrix(0.97 0 0 1 1563.38 147.6)" font-size="12.8" fill="#ececec" stroke="#ececec" stroke-width="0.15" >Filtern</text>
<path d="M1600.75 142.1 L1603.5 144.9 L1606.25 142.1" fill="none" stroke="#e6e6e6" stroke-width="1.15"/>
<g fill="none" stroke="#e0e0e0" stroke-width="1.1"><circle cx="1666.3" cy="97.5" r="10"/><path d="M1659 104.8 L1647.8 115.8"/></g>
<text transform="matrix(0.94 0 0 1 1630.36 132.2)" font-size="12.8" fill="#ececec" stroke="#ececec" stroke-width="0.15" >Suchen und</text>
<text transform="matrix(0.93 0 0 1 1628.27 147.6)" font-size="12.8" fill="#ececec" stroke="#ececec" stroke-width="0.15" >Auswählen</text>
<path d="M1690.05 142.1 L1692.8 144.9 L1695.55 142.1" fill="none" stroke="#e6e6e6" stroke-width="1.15"/>
<text transform="matrix(0.91 0 0 1 1536.04 172)" font-size="12.8" fill="#ececec" stroke="#ececec" stroke-width="0.15" >Bearbeiten</text>
<g fill="none" stroke="#c85530" stroke-width="1.2"><rect x="1723.3" y="87" width="27.4" height="28" rx="1.5"/><rect x="1726.8" y="90.5" width="8.5" height="8.5"/><rect x="1738.6" y="90.5" width="8.5" height="8.5"/><rect x="1726.8" y="103" width="8.5" height="8.5"/><rect x="1738.6" y="103" width="8.5" height="8.5"/></g>
<text transform="matrix(1 0 0 1 1722.97 132)" font-size="12.8" fill="#ececec" stroke="#ececec" stroke-width="0.15" >Add-</text>
<text transform="matrix(1.01 0 0 1 1727.5 147.6)" font-size="12.8" fill="#ececec" stroke="#ececec" stroke-width="0.15" >Ins</text>
<text transform="matrix(0.91 0 0 1 1716.97 172)" font-size="12.8" fill="#ececec" stroke="#ececec" stroke-width="0.15" >Add-Ins</text>
<g fill="none" stroke="#d8d8d8" stroke-width="1.1"><rect x="1795.5" y="85.5" width="31" height="31"/><path d="M1795.5 89 H1826.5 M1815 95 H1826.5 M1815 102 H1826.5 M1795.5 109 H1826.5 M1804 109 V116.5 M1814 109 V116.5 M1820 89 V105"/></g>
<circle cx="1809.8" cy="98.3" r="9.3" fill="#4a4a4a" stroke="#e0e0e0" stroke-width="1.2"/>
<path d="M1816.5 105 L1826.5 115.5" stroke="#e0e0e0" stroke-width="1.3"/>
<rect x="1803.5" y="97" width="3" height="5" fill="#9a9a9a" />
<rect x="1807.2" y="93" width="3" height="9" fill="#e0e0e0" />
<rect x="1811" y="95" width="3" height="7" fill="#2f80d8" />
<text transform="matrix(0.91 0 0 1 1775.44 132)" font-size="12.8" fill="#ececec" stroke="#ececec" stroke-width="0.15" >Datenanalyse</text>
<path d="M1892.2 161.8 L1897.2 166.8 L1902.2 161.8" fill="none" stroke="#e0e0e0" stroke-width="1.2"/>
<rect x="8.5" y="186.5" width="101" height="25" rx="4" fill="#4a4a4a" stroke="#9a9a9a"/>
<text transform="matrix(0.96 0 0 1 14.49 204)" font-size="13.5" fill="#f2f2f2" stroke="#f2f2f2" stroke-width="0.15" >U9</text>
<path d="M91.4 196.5 L96.4 201.5 L101.4 196.5" fill="none" stroke="#d0d0d0" stroke-width="1.1"/>
<g fill="#d0d0d0"><circle cx="120.2" cy="194.5" r="1.1"/><circle cx="120.2" cy="199" r="1.1"/><circle cx="120.2" cy="203.5" r="1.1"/></g>
<rect x="130.5" y="186.5" width="73" height="25" rx="4" fill="#4a4a4a" stroke="#9a9a9a"/>
<path d="M137.5 193.5 L149.5 205 M149.5 193.5 L137.5 205" stroke="#808080" stroke-width="1.1"/>
<path d="M158.5 199.5 L163.5 204.5 L175 193" fill="none" stroke="#808080" stroke-width="1.1"/>
<text transform="matrix(1 0 0 1 184 205.5)" font-size="16" fill="#d8d8d8" stroke="#d8d8d8" stroke-width="0.15" font-family="Liberation Serif" font-style="italic">fx</text>
<rect x="208.5" y="186.5" width="1702" height="25" rx="4" fill="#4a4a4a" stroke="#9a9a9a"/>
<path d="M1897.3 195 L1902.3 200 L1907.3 195" fill="none" stroke="#d0d0d0" stroke-width="1.1"/>
<g clip-path="url(#gclip)">
<rect x="37" y="268" width="1861" height="1" fill="#dadada" />
<rect x="37" y="293" width="1861" height="1" fill="#dadada" />
<rect x="37" y="318" width="1861" height="1" fill="#dadada" />
<rect x="37" y="343" width="1861" height="1" fill="#dadada" />
<rect x="37" y="368" width="1861" height="1" fill="#dadada" />
<rect x="37" y="393" width="1861" height="1" fill="#dadada" />
<rect x="37" y="418" width="1861" height="1" fill="#dadada" />
<rect x="37" y="443" width="1861" height="1" fill="#dadada" />
<rect x="37" y="468" width="1861" height="1" fill="#dadada" />
<rect x="37" y="493" width="1861" height="1" fill="#dadada" />
<rect x="37" y="518" width="1861" height="1" fill="#dadada" />
<rect x="37" y="543" width="1861" height="1" fill="#dadada" />
<rect x="37" y="568" width="1861" height="1" fill="#dadada" />
<rect x="37" y="593" width="1861" height="1" fill="#dadada" />
<rect x="37" y="618" width="1861" height="1" fill="#dadada" />
<rect x="37" y="643" width="1861" height="1" fill="#dadada" />
<rect x="37" y="668" width="1861" height="1" fill="#dadada" />
<rect x="37" y="693" width="1861" height="1" fill="#dadada" />
<rect x="37" y="718" width="1861" height="1" fill="#dadada" />
<rect x="37" y="743" width="1861" height="1" fill="#dadada" />
<rect x="37" y="768" width="1861" height="1" fill="#dadada" />
<rect x="37" y="793" width="1861" height="1" fill="#dadada" />
<rect x="37" y="818" width="1861" height="1" fill="#dadada" />
<rect x="37" y="843" width="1861" height="1" fill="#dadada" />
<rect x="37" y="868" width="1861" height="1" fill="#dadada" />
<rect x="37" y="893" width="1861" height="1" fill="#dadada" />
<rect x="37" y="918" width="1861" height="1" fill="#dadada" />
<rect x="37" y="943" width="1861" height="1" fill="#dadada" />
<rect x="37" y="968" width="1861" height="1" fill="#dadada" />
<rect x="37" y="993" width="1861" height="1" fill="#dadada" />
<rect x="115" y="244" width="1" height="734" fill="#dadada" />
<rect x="189" y="244" width="1" height="734" fill="#dadada" />
<rect x="268" y="244" width="1" height="734" fill="#dadada" />
<rect x="333" y="244" width="1" height="734" fill="#dadada" />
<rect x="398" y="244" width="1" height="734" fill="#dadada" />
<rect x="503" y="244" width="1" height="734" fill="#dadada" />
<rect x="594" y="244" width="1" height="734" fill="#dadada" />
<rect x="681" y="244" width="1" height="734" fill="#dadada" />
<rect x="802" y="244" width="1" height="734" fill="#dadada" />
<rect x="883" y="244" width="1" height="734" fill="#dadada" />
<rect x="949" y="244" width="1" height="734" fill="#dadada" />
<rect x="1024" y="244" width="1" height="734" fill="#dadada" />
<rect x="1099" y="244" width="1" height="734" fill="#dadada" />
<rect x="1199" y="244" width="1" height="734" fill="#dadada" />
<rect x="1306" y="244" width="1" height="734" fill="#dadada" />
<rect x="1453" y="244" width="1" height="734" fill="#dadada" />
<rect x="1528" y="244" width="1" height="734" fill="#dadada" />
<rect x="1711" y="244" width="1" height="734" fill="#dadada" />
<rect x="1794" y="244" width="1" height="734" fill="#dadada" />
<rect x="115" y="219" width="1" height="24" fill="#b8b8b8" />
<rect x="189" y="219" width="1" height="24" fill="#b8b8b8" />
<rect x="268" y="219" width="1" height="24" fill="#b8b8b8" />
<rect x="333" y="219" width="1" height="24" fill="#b8b8b8" />
<rect x="398" y="219" width="1" height="24" fill="#b8b8b8" />
<rect x="503" y="219" width="1" height="24" fill="#b8b8b8" />
<rect x="594" y="219" width="1" height="24" fill="#b8b8b8" />
<rect x="681" y="219" width="1" height="24" fill="#b8b8b8" />
<rect x="802" y="219" width="1" height="24" fill="#b8b8b8" />
<rect x="883" y="219" width="1" height="24" fill="#b8b8b8" />
<rect x="949" y="219" width="1" height="24" fill="#b8b8b8" />
<rect x="1024" y="219" width="1" height="24" fill="#b8b8b8" />
<rect x="1099" y="219" width="1" height="24" fill="#b8b8b8" />
<rect x="1199" y="219" width="1" height="24" fill="#b8b8b8" />
<rect x="1306" y="219" width="1" height="24" fill="#b8b8b8" />
<rect x="1453" y="219" width="1" height="24" fill="#b8b8b8" />
<rect x="1528" y="219" width="1" height="24" fill="#b8b8b8" />
<rect x="1711" y="219" width="1" height="24" fill="#b8b8b8" />
<rect x="1794" y="219" width="1" height="24" fill="#b8b8b8" />
<rect x="36" y="219" width="1" height="25" fill="#c4c4c4" />
<rect x="36" y="244" width="1" height="734" fill="#8a8a8a" />
<rect x="0" y="243" width="37" height="1" fill="#cccccc" />
<rect x="37" y="243" width="1861" height="1" fill="#8c8c8c" />
<rect x="0" y="268" width="36" height="1" fill="#c0c0c0" />
<rect x="0" y="293" width="36" height="1" fill="#c0c0c0" />
<rect x="0" y="318" width="36" height="1" fill="#c0c0c0" />
<rect x="0" y="343" width="36" height="1" fill="#c0c0c0" />
<rect x="0" y="368" width="36" height="1" fill="#c0c0c0" />
<rect x="0" y="393" width="36" height="1" fill="#c0c0c0" />
<rect x="0" y="418" width="36" height="1" fill="#c0c0c0" />
<rect x="0" y="443" width="36" height="1" fill="#c0c0c0" />
<rect x="0" y="468" width="36" height="1" fill="#c0c0c0" />
<rect x="0" y="493" width="36" height="1" fill="#c0c0c0" />
<rect x="0" y="518" width="36" height="1" fill="#c0c0c0" />
<rect x="0" y="543" width="36" height="1" fill="#c0c0c0" />
<rect x="0" y="568" width="36" height="1" fill="#c0c0c0" />
<rect x="0" y="593" width="36" height="1" fill="#c0c0c0" />
<rect x="0" y="618" width="36" height="1" fill="#c0c0c0" />
<rect x="0" y="643" width="36" height="1" fill="#c0c0c0" />
<rect x="0" y="668" width="36" height="1" fill="#c0c0c0" />
<rect x="0" y="693" width="36" height="1" fill="#c0c0c0" />
<rect x="0" y="718" width="36" height="1" fill="#c0c0c0" />
<rect x="0" y="743" width="36" height="1" fill="#c0c0c0" />
<rect x="0" y="768" width="36" height="1" fill="#c0c0c0" />
<rect x="0" y="793" width="36" height="1" fill="#c0c0c0" />
<rect x="0" y="818" width="36" height="1" fill="#c0c0c0" />
<rect x="0" y="843" width="36" height="1" fill="#c0c0c0" />
<rect x="0" y="868" width="36" height="1" fill="#c0c0c0" />
<rect x="0" y="893" width="36" height="1" fill="#c0c0c0" />
<rect x="0" y="918" width="36" height="1" fill="#c0c0c0" />
<rect x="0" y="943" width="36" height="1" fill="#c0c0c0" />
<rect x="0" y="968" width="36" height="1" fill="#c0c0c0" />
<rect x="0" y="993" width="36" height="1" fill="#c0c0c0" />
<path d="M16.5 240 L33 223.5 V240 Z" fill="#e6e6e6"/>
<rect x="0" y="319" width="34.5" height="24" fill="#676767" />
<rect x="34.3" y="318.5" width="2.4" height="25" fill="#1e7145" />
<text transform="matrix(0.99 0 0 1 58.01 236.8)" font-size="17.3" fill="#f2f2f2" stroke="#f2f2f2" stroke-width="0.15" >Time</text>
<text transform="matrix(0.95 0 0 1 130.63 236.8)" font-size="17.3" fill="#f2f2f2" stroke="#f2f2f2" stroke-width="0.15" >TProc</text>
<text transform="matrix(0.92 0 0 1 206.34 236.8)" font-size="17.3" fill="#f2f2f2" stroke="#f2f2f2" stroke-width="0.15" >TRatio</text>
<text transform="matrix(0.93 0 0 1 283.94 236.8)" font-size="17.3" fill="#f2f2f2" stroke="#f2f2f2" stroke-width="0.15" >TWB</text>
<text transform="matrix(0.95 0 0 1 349.73 236.8)" font-size="17.3" fill="#f2f2f2" stroke="#f2f2f2" stroke-width="0.15" >TNB</text>
<text transform="matrix(0.99 0 0 1 414.82 236.8)" font-size="17.3" fill="#f2f2f2" stroke="#f2f2f2" stroke-width="0.15" >TActRatio</text>
<text transform="matrix(0.97 0 0 1 519.22 236.8)" font-size="17.3" fill="#f2f2f2" stroke="#f2f2f2" stroke-width="0.15" >TActWB</text>
<text transform="matrix(0.99 0 0 1 610.12 236.8)" font-size="17.3" fill="#f2f2f2" stroke="#f2f2f2" stroke-width="0.15" >TActNB</text>
<text transform="matrix(1.05 0 0 1 696.95 236.8)" font-size="17.3" fill="#f2f2f2" stroke="#f2f2f2" stroke-width="0.15" >Attenuation</text>
<text transform="matrix(0.97 0 0 1 818.62 236.8)" font-size="17.3" fill="#f2f2f2" stroke="#f2f2f2" stroke-width="0.15" >THead</text>
<text transform="matrix(0.94 0 0 1 897.53 236.8)" font-size="17.3" fill="#f2f2f2" stroke="#f2f2f2" stroke-width="0.15" >TBox</text>
<text transform="matrix(0.89 0 0 1 964.23 236.8)" font-size="17.3" fill="#f2f2f2" stroke="#f2f2f2" stroke-width="0.15" >EpsT1</text>
<text transform="matrix(0.9 0 0 1 1039.31 236.8)" font-size="17.3" fill="#f2f2f2" stroke="#f2f2f2" stroke-width="0.15" >EpsT2</text>
<text transform="matrix(0.97 0 0 1 1115.92 236.8)" font-size="17.3" fill="#f2f2f2" stroke="#f2f2f2" stroke-width="0.15" >TActProc</text>
<text transform="matrix(0.92 0 0 1 1216.14 236.8)" font-size="17.3" fill="#f2f2f2" stroke="#f2f2f2" stroke-width="0.15" >TRawProc</text>
<text transform="matrix(1.04 0 0 1 1322.06 236.8)" font-size="17.3" fill="#f2f2f2" stroke="#f2f2f2" stroke-width="0.15" >ActAttenuation</text>
<text transform="matrix(0.97 0 0 1 1469.44 236.8)" font-size="17.3" fill="#f2f2f2" stroke="#f2f2f2" stroke-width="0.15" >Slope</text>
<text transform="matrix(1.03 0 0 1 1545.02 236.8)" font-size="17.3" fill="#f2f2f2" stroke="#f2f2f2" stroke-width="0.15" >UncommittedValue</text>
<text transform="matrix(0.99 0 0 1 1726.29 236.8)" font-size="17.3" fill="#f2f2f2" stroke="#f2f2f2" stroke-width="0.15" >mVIO1</text>
<text transform="matrix(0.96 0 0 1 1810.56 236.8)" font-size="17.3" fill="#f2f2f2" stroke="#f2f2f2" stroke-width="0.15" >SnapshotGroup</text>
<text transform="matrix(0.9 0 0 1 18.6 261.8)" font-size="17.5" fill="#f0f0f0" stroke="#f0f0f0" stroke-width="0.15" text-anchor="middle" >6</text>
<text transform="matrix(1.06 0 0 1 41.6 261.8)" font-size="16.8" fill="#000" >00:00:00</text>
<text transform="matrix(1.06 0 0 1 185.8 261.8)" font-size="16.8" fill="#000" text-anchor="end" >1840,8</text>
<text transform="matrix(1.06 0 0 1 264.8 261.8)" font-size="16.8" fill="#000" text-anchor="end" >1840,5</text>
<text transform="matrix(1.06 0 0 1 329.8 261.8)" font-size="16.8" fill="#000" text-anchor="end" >1334</text>
<text transform="matrix(1.06 0 0 1 394.8 261.8)" font-size="16.8" fill="#000" text-anchor="end" >1292</text>
<text transform="matrix(1.06 0 0 1 499.8 261.8)" font-size="16.8" fill="#000" text-anchor="end" >1840,5</text>
<text transform="matrix(1.06 0 0 1 590.8 261.8)" font-size="16.8" fill="#000" text-anchor="end" >1333,6</text>
<text transform="matrix(1.06 0 0 1 677.8 261.8)" font-size="16.8" fill="#000" text-anchor="end" >1292</text>
<text transform="matrix(1.06 0 0 1 798.8 261.8)" font-size="16.8" fill="#000" text-anchor="end" >89</text>
<text transform="matrix(1.06 0 0 1 879.8 261.8)" font-size="16.8" fill="#000" text-anchor="end" >65,2</text>
<text transform="matrix(1.06 0 0 1 945.8 261.8)" font-size="16.8" fill="#000" text-anchor="end" >34,2</text>
<text transform="matrix(1.06 0 0 1 1020.8 261.8)" font-size="16.8" fill="#000" text-anchor="end" >1</text>
<text transform="matrix(1.06 0 0 1 1095.8 261.8)" font-size="16.8" fill="#000" text-anchor="end" >1</text>
<text transform="matrix(1.06 0 0 1 1195.8 261.8)" font-size="16.8" fill="#000" text-anchor="end" >1840,5</text>
<text transform="matrix(1.06 0 0 1 1302.8 261.8)" font-size="16.8" fill="#000" text-anchor="end" >1840,5</text>
<text transform="matrix(1.06 0 0 1 1449.8 261.8)" font-size="16.8" fill="#000" text-anchor="end" >89</text>
<text transform="matrix(1.06 0 0 1 1524.8 261.8)" font-size="16.8" fill="#000" text-anchor="end" >1</text>
<text transform="matrix(1.06 0 0 1 1707.8 261.8)" font-size="16.8" fill="#000" text-anchor="end" >-100</text>
<text transform="matrix(1.06 0 0 1 1790.8 261.8)" font-size="16.8" fill="#000" text-anchor="end" >0,023</text>
<text transform="matrix(0.9 0 0 1 18.6 286.8)" font-size="17.5" fill="#f0f0f0" stroke="#f0f0f0" stroke-width="0.15" text-anchor="middle" >7</text>
<text transform="matrix(1.06 0 0 1 41.6 286.8)" font-size="16.8" fill="#000" >00:00:00</text>
<text transform="matrix(1.06 0 0 1 185.8 286.8)" font-size="16.8" fill="#000" text-anchor="end" >1840,8</text>
<text transform="matrix(1.06 0 0 1 264.8 286.8)" font-size="16.8" fill="#000" text-anchor="end" >1840,6</text>
<text transform="matrix(1.06 0 0 1 329.8 286.8)" font-size="16.8" fill="#000" text-anchor="end" >1334</text>
<text transform="matrix(1.06 0 0 1 394.8 286.8)" font-size="16.8" fill="#000" text-anchor="end" >1292</text>
<text transform="matrix(1.06 0 0 1 499.8 286.8)" font-size="16.8" fill="#000" text-anchor="end" >1840,5</text>
<text transform="matrix(1.06 0 0 1 590.8 286.8)" font-size="16.8" fill="#000" text-anchor="end" >1333,5</text>
<text transform="matrix(1.06 0 0 1 677.8 286.8)" font-size="16.8" fill="#000" text-anchor="end" >1291,9</text>
<text transform="matrix(1.06 0 0 1 798.8 286.8)" font-size="16.8" fill="#000" text-anchor="end" >89</text>
<text transform="matrix(1.06 0 0 1 879.8 286.8)" font-size="16.8" fill="#000" text-anchor="end" >65,2</text>
<text transform="matrix(1.06 0 0 1 945.8 286.8)" font-size="16.8" fill="#000" text-anchor="end" >34,2</text>
<text transform="matrix(1.06 0 0 1 1020.8 286.8)" font-size="16.8" fill="#000" text-anchor="end" >1</text>
<text transform="matrix(1.06 0 0 1 1095.8 286.8)" font-size="16.8" fill="#000" text-anchor="end" >1</text>
<text transform="matrix(1.06 0 0 1 1195.8 286.8)" font-size="16.8" fill="#000" text-anchor="end" >1840,6</text>
<text transform="matrix(1.06 0 0 1 1302.8 286.8)" font-size="16.8" fill="#000" text-anchor="end" >1840,5</text>
<text transform="matrix(1.06 0 0 1 1449.8 286.8)" font-size="16.8" fill="#000" text-anchor="end" >89</text>
<text transform="matrix(1.06 0 0 1 1524.8 286.8)" font-size="16.8" fill="#000" text-anchor="end" >1</text>
<text transform="matrix(1.06 0 0 1 1707.8 286.8)" font-size="16.8" fill="#000" text-anchor="end" >-100</text>
<text transform="matrix(1.06 0 0 1 1790.8 286.8)" font-size="16.8" fill="#000" text-anchor="end" >0,017</text>
<text transform="matrix(0.9 0 0 1 18.6 311.8)" font-size="17.5" fill="#f0f0f0" stroke="#f0f0f0" stroke-width="0.15" text-anchor="middle" >8</text>
<text transform="matrix(1.06 0 0 1 41.6 311.8)" font-size="16.8" fill="#000" >00:00:00</text>
<text transform="matrix(1.06 0 0 1 185.8 311.8)" font-size="16.8" fill="#000" text-anchor="end" >1840,8</text>
<text transform="matrix(1.06 0 0 1 264.8 311.8)" font-size="16.8" fill="#000" text-anchor="end" >1840,8</text>
<text transform="matrix(1.06 0 0 1 329.8 311.8)" font-size="16.8" fill="#000" text-anchor="end" >1334</text>
<text transform="matrix(1.06 0 0 1 394.8 311.8)" font-size="16.8" fill="#000" text-anchor="end" >1292</text>
<text transform="matrix(1.06 0 0 1 499.8 311.8)" font-size="16.8" fill="#000" text-anchor="end" >1840,3</text>
<text transform="matrix(1.06 0 0 1 590.8 311.8)" font-size="16.8" fill="#000" text-anchor="end" >1333,7</text>
<text transform="matrix(1.06 0 0 1 677.8 311.8)" font-size="16.8" fill="#000" text-anchor="end" >1292</text>
<text transform="matrix(1.06 0 0 1 798.8 311.8)" font-size="16.8" fill="#000" text-anchor="end" >89</text>
<text transform="matrix(1.06 0 0 1 879.8 311.8)" font-size="16.8" fill="#000" text-anchor="end" >65,2</text>
<text transform="matrix(1.06 0 0 1 945.8 311.8)" font-size="16.8" fill="#000" text-anchor="end" >34,2</text>
<text transform="matrix(1.06 0 0 1 1020.8 311.8)" font-size="16.8" fill="#000" text-anchor="end" >1</text>
<text transform="matrix(1.06 0 0 1 1095.8 311.8)" font-size="16.8" fill="#000" text-anchor="end" >1</text>
<text transform="matrix(1.06 0 0 1 1195.8 311.8)" font-size="16.8" fill="#000" text-anchor="end" >1840,8</text>
<text transform="matrix(1.06 0 0 1 1302.8 311.8)" font-size="16.8" fill="#000" text-anchor="end" >1840,3</text>
<text transform="matrix(1.06 0 0 1 1449.8 311.8)" font-size="16.8" fill="#000" text-anchor="end" >89</text>
<text transform="matrix(1.06 0 0 1 1524.8 311.8)" font-size="16.8" fill="#000" text-anchor="end" >1</text>
<text transform="matrix(1.06 0 0 1 1707.8 311.8)" font-size="16.8" fill="#000" text-anchor="end" >-100</text>
<text transform="matrix(1.06 0 0 1 1790.8 311.8)" font-size="16.8" fill="#000" text-anchor="end" >0,015</text>
<text transform="matrix(0.9 0 0 1 18.6 336.8)" font-size="17.5" fill="#f0f0f0" stroke="#f0f0f0" stroke-width="0.15" text-anchor="middle" >9</text>
<text transform="matrix(1.06 0 0 1 41.6 336.8)" font-size="16.8" fill="#000" >00:00:00</text>
<text transform="matrix(1.06 0 0 1 185.8 336.8)" font-size="16.8" fill="#000" text-anchor="end" >1840,8</text>
<text transform="matrix(1.06 0 0 1 264.8 336.8)" font-size="16.8" fill="#000" text-anchor="end" >1840,6</text>
<text transform="matrix(1.06 0 0 1 329.8 336.8)" font-size="16.8" fill="#000" text-anchor="end" >1334</text>
<text transform="matrix(1.06 0 0 1 394.8 336.8)" font-size="16.8" fill="#000" text-anchor="end" >1292</text>
<text transform="matrix(1.06 0 0 1 499.8 336.8)" font-size="16.8" fill="#000" text-anchor="end" >1840,1</text>
<text transform="matrix(1.06 0 0 1 590.8 336.8)" font-size="16.8" fill="#000" text-anchor="end" >1333,8</text>
<text transform="matrix(1.06 0 0 1 677.8 336.8)" font-size="16.8" fill="#000" text-anchor="end" >1292,2</text>
<text transform="matrix(1.06 0 0 1 798.8 336.8)" font-size="16.8" fill="#000" text-anchor="end" >89</text>
<text transform="matrix(1.06 0 0 1 879.8 336.8)" font-size="16.8" fill="#000" text-anchor="end" >65,2</text>
<text transform="matrix(1.06 0 0 1 945.8 336.8)" font-size="16.8" fill="#000" text-anchor="end" >34,2</text>
<text transform="matrix(1.06 0 0 1 1020.8 336.8)" font-size="16.8" fill="#000" text-anchor="end" >1</text>
<text transform="matrix(1.06 0 0 1 1095.8 336.8)" font-size="16.8" fill="#000" text-anchor="end" >1</text>
<text transform="matrix(1.06 0 0 1 1195.8 336.8)" font-size="16.8" fill="#000" text-anchor="end" >1840,6</text>
<text transform="matrix(1.06 0 0 1 1302.8 336.8)" font-size="16.8" fill="#000" text-anchor="end" >1840,1</text>
<text transform="matrix(1.06 0 0 1 1449.8 336.8)" font-size="16.8" fill="#000" text-anchor="end" >89</text>
<text transform="matrix(1.06 0 0 1 1524.8 336.8)" font-size="16.8" fill="#000" text-anchor="end" >1</text>
<text transform="matrix(1.06 0 0 1 1707.8 336.8)" font-size="16.8" fill="#000" text-anchor="end" >-100</text>
<text transform="matrix(1.06 0 0 1 1790.8 336.8)" font-size="16.8" fill="#000" text-anchor="end" >0,016</text>
<text transform="matrix(0.9 0 0 1 18.6 361.8)" font-size="17.5" fill="#f0f0f0" stroke="#f0f0f0" stroke-width="0.15" text-anchor="middle" >10</text>
<text transform="matrix(1.06 0 0 1 41.6 361.8)" font-size="16.8" fill="#000" >00:00:00</text>
<text transform="matrix(1.06 0 0 1 185.8 361.8)" font-size="16.8" fill="#000" text-anchor="end" >1840,8</text>
<text transform="matrix(1.06 0 0 1 264.8 361.8)" font-size="16.8" fill="#000" text-anchor="end" >1840,6</text>
<text transform="matrix(1.06 0 0 1 329.8 361.8)" font-size="16.8" fill="#000" text-anchor="end" >1334</text>
<text transform="matrix(1.06 0 0 1 394.8 361.8)" font-size="16.8" fill="#000" text-anchor="end" >1292</text>
<text transform="matrix(1.06 0 0 1 499.8 361.8)" font-size="16.8" fill="#000" text-anchor="end" >1841</text>
<text transform="matrix(1.06 0 0 1 590.8 361.8)" font-size="16.8" fill="#000" text-anchor="end" >1333,8</text>
<text transform="matrix(1.06 0 0 1 677.8 361.8)" font-size="16.8" fill="#000" text-anchor="end" >1292,1</text>
<text transform="matrix(1.06 0 0 1 798.8 361.8)" font-size="16.8" fill="#000" text-anchor="end" >89</text>
<text transform="matrix(1.06 0 0 1 879.8 361.8)" font-size="16.8" fill="#000" text-anchor="end" >65,2</text>
<text transform="matrix(1.06 0 0 1 945.8 361.8)" font-size="16.8" fill="#000" text-anchor="end" >34,2</text>
<text transform="matrix(1.06 0 0 1 1020.8 361.8)" font-size="16.8" fill="#000" text-anchor="end" >1</text>
<text transform="matrix(1.06 0 0 1 1095.8 361.8)" font-size="16.8" fill="#000" text-anchor="end" >1</text>
<text transform="matrix(1.06 0 0 1 1195.8 361.8)" font-size="16.8" fill="#000" text-anchor="end" >1840,6</text>
<text transform="matrix(1.06 0 0 1 1302.8 361.8)" font-size="16.8" fill="#000" text-anchor="end" >1841</text>
<text transform="matrix(1.06 0 0 1 1449.8 361.8)" font-size="16.8" fill="#000" text-anchor="end" >89</text>
<text transform="matrix(1.06 0 0 1 1524.8 361.8)" font-size="16.8" fill="#000" text-anchor="end" >1</text>
<text transform="matrix(1.06 0 0 1 1707.8 361.8)" font-size="16.8" fill="#000" text-anchor="end" >-100</text>
<text transform="matrix(1.06 0 0 1 1790.8 361.8)" font-size="16.8" fill="#000" text-anchor="end" >0,009</text>
<text transform="matrix(0.9 0 0 1 18.6 386.8)" font-size="17.5" fill="#f0f0f0" stroke="#f0f0f0" stroke-width="0.15" text-anchor="middle" >11</text>
<text transform="matrix(1.06 0 0 1 41.6 386.8)" font-size="16.8" fill="#000" >00:00:00</text>
<text transform="matrix(1.06 0 0 1 185.8 386.8)" font-size="16.8" fill="#000" text-anchor="end" >1840,8</text>
<text transform="matrix(1.06 0 0 1 264.8 386.8)" font-size="16.8" fill="#000" text-anchor="end" >1840,6</text>
<text transform="matrix(1.06 0 0 1 329.8 386.8)" font-size="16.8" fill="#000" text-anchor="end" >1334</text>
<text transform="matrix(1.06 0 0 1 394.8 386.8)" font-size="16.8" fill="#000" text-anchor="end" >1292</text>
<text transform="matrix(1.06 0 0 1 499.8 386.8)" font-size="16.8" fill="#000" text-anchor="end" >1840,4</text>
<text transform="matrix(1.06 0 0 1 590.8 386.8)" font-size="16.8" fill="#000" text-anchor="end" >1333,8</text>
<text transform="matrix(1.06 0 0 1 677.8 386.8)" font-size="16.8" fill="#000" text-anchor="end" >1292,1</text>
<text transform="matrix(1.06 0 0 1 798.8 386.8)" font-size="16.8" fill="#000" text-anchor="end" >89</text>
<text transform="matrix(1.06 0 0 1 879.8 386.8)" font-size="16.8" fill="#000" text-anchor="end" >65,2</text>
<text transform="matrix(1.06 0 0 1 945.8 386.8)" font-size="16.8" fill="#000" text-anchor="end" >34,2</text>
<text transform="matrix(1.06 0 0 1 1020.8 386.8)" font-size="16.8" fill="#000" text-anchor="end" >1</text>
<text transform="matrix(1.06 0 0 1 1095.8 386.8)" font-size="16.8" fill="#000" text-anchor="end" >1</text>
<text transform="matrix(1.06 0 0 1 1195.8 386.8)" font-size="16.8" fill="#000" text-anchor="end" >1840,6</text>
<text transform="matrix(1.06 0 0 1 1302.8 386.8)" font-size="16.8" fill="#000" text-anchor="end" >1840,4</text>
<text transform="matrix(1.06 0 0 1 1449.8 386.8)" font-size="16.8" fill="#000" text-anchor="end" >89</text>
<text transform="matrix(1.06 0 0 1 1524.8 386.8)" font-size="16.8" fill="#000" text-anchor="end" >1</text>
<text transform="matrix(1.06 0 0 1 1707.8 386.8)" font-size="16.8" fill="#000" text-anchor="end" >-100</text>
<text transform="matrix(1.06 0 0 1 1790.8 386.8)" font-size="16.8" fill="#000" text-anchor="end" >0</text>
<text transform="matrix(0.9 0 0 1 18.6 411.8)" font-size="17.5" fill="#f0f0f0" stroke="#f0f0f0" stroke-width="0.15" text-anchor="middle" >12</text>
<text transform="matrix(1.06 0 0 1 41.6 411.8)" font-size="16.8" fill="#000" >00:00:00</text>
<text transform="matrix(1.06 0 0 1 185.8 411.8)" font-size="16.8" fill="#000" text-anchor="end" >1840,8</text>
<text transform="matrix(1.06 0 0 1 264.8 411.8)" font-size="16.8" fill="#000" text-anchor="end" >1840,6</text>
<text transform="matrix(1.06 0 0 1 329.8 411.8)" font-size="16.8" fill="#000" text-anchor="end" >1334</text>
<text transform="matrix(1.06 0 0 1 394.8 411.8)" font-size="16.8" fill="#000" text-anchor="end" >1292</text>
<text transform="matrix(1.06 0 0 1 499.8 411.8)" font-size="16.8" fill="#000" text-anchor="end" >1840,6</text>
<text transform="matrix(1.06 0 0 1 590.8 411.8)" font-size="16.8" fill="#000" text-anchor="end" >1333,7</text>
<text transform="matrix(1.06 0 0 1 677.8 411.8)" font-size="16.8" fill="#000" text-anchor="end" >1292,1</text>
<text transform="matrix(1.06 0 0 1 798.8 411.8)" font-size="16.8" fill="#000" text-anchor="end" >89</text>
<text transform="matrix(1.06 0 0 1 879.8 411.8)" font-size="16.8" fill="#000" text-anchor="end" >65,2</text>
<text transform="matrix(1.06 0 0 1 945.8 411.8)" font-size="16.8" fill="#000" text-anchor="end" >34,2</text>
<text transform="matrix(1.06 0 0 1 1020.8 411.8)" font-size="16.8" fill="#000" text-anchor="end" >1</text>
<text transform="matrix(1.06 0 0 1 1095.8 411.8)" font-size="16.8" fill="#000" text-anchor="end" >1</text>
<text transform="matrix(1.06 0 0 1 1195.8 411.8)" font-size="16.8" fill="#000" text-anchor="end" >1840,6</text>
<text transform="matrix(1.06 0 0 1 1302.8 411.8)" font-size="16.8" fill="#000" text-anchor="end" >1840,6</text>
<text transform="matrix(1.06 0 0 1 1449.8 411.8)" font-size="16.8" fill="#000" text-anchor="end" >89</text>
<text transform="matrix(1.06 0 0 1 1524.8 411.8)" font-size="16.8" fill="#000" text-anchor="end" >1</text>
<text transform="matrix(1.06 0 0 1 1707.8 411.8)" font-size="16.8" fill="#000" text-anchor="end" >-100</text>
<text transform="matrix(1.06 0 0 1 1790.8 411.8)" font-size="16.8" fill="#000" text-anchor="end" >0,015</text>
<text transform="matrix(0.9 0 0 1 18.6 436.8)" font-size="17.5" fill="#f0f0f0" stroke="#f0f0f0" stroke-width="0.15" text-anchor="middle" >13</text>
<text transform="matrix(1.06 0 0 1 41.6 436.8)" font-size="16.8" fill="#000" >00:00:00</text>
<text transform="matrix(1.06 0 0 1 185.8 436.8)" font-size="16.8" fill="#000" text-anchor="end" >1840,8</text>
<text transform="matrix(1.06 0 0 1 264.8 436.8)" font-size="16.8" fill="#000" text-anchor="end" >1840,5</text>
<text transform="matrix(1.06 0 0 1 329.8 436.8)" font-size="16.8" fill="#000" text-anchor="end" >1334</text>
<text transform="matrix(1.06 0 0 1 394.8 436.8)" font-size="16.8" fill="#000" text-anchor="end" >1292</text>
<text transform="matrix(1.06 0 0 1 499.8 436.8)" font-size="16.8" fill="#000" text-anchor="end" >1840,4</text>
<text transform="matrix(1.06 0 0 1 590.8 436.8)" font-size="16.8" fill="#000" text-anchor="end" >1333,8</text>
<text transform="matrix(1.06 0 0 1 677.8 436.8)" font-size="16.8" fill="#000" text-anchor="end" >1292,2</text>
<text transform="matrix(1.06 0 0 1 798.8 436.8)" font-size="16.8" fill="#000" text-anchor="end" >89</text>
<text transform="matrix(1.06 0 0 1 879.8 436.8)" font-size="16.8" fill="#000" text-anchor="end" >65,2</text>
<text transform="matrix(1.06 0 0 1 945.8 436.8)" font-size="16.8" fill="#000" text-anchor="end" >34,2</text>
<text transform="matrix(1.06 0 0 1 1020.8 436.8)" font-size="16.8" fill="#000" text-anchor="end" >1</text>
<text transform="matrix(1.06 0 0 1 1095.8 436.8)" font-size="16.8" fill="#000" text-anchor="end" >1</text>
<text transform="matrix(1.06 0 0 1 1195.8 436.8)" font-size="16.8" fill="#000" text-anchor="end" >1840,5</text>
<text transform="matrix(1.06 0 0 1 1302.8 436.8)" font-size="16.8" fill="#000" text-anchor="end" >1840,4</text>
<text transform="matrix(1.06 0 0 1 1449.8 436.8)" font-size="16.8" fill="#000" text-anchor="end" >89</text>
<text transform="matrix(1.06 0 0 1 1524.8 436.8)" font-size="16.8" fill="#000" text-anchor="end" >1</text>
<text transform="matrix(1.06 0 0 1 1707.8 436.8)" font-size="16.8" fill="#000" text-anchor="end" >-100</text>
<text transform="matrix(1.06 0 0 1 1790.8 436.8)" font-size="16.8" fill="#000" text-anchor="end" >0,009</text>
<text transform="matrix(0.9 0 0 1 18.6 461.8)" font-size="17.5" fill="#f0f0f0" stroke="#f0f0f0" stroke-width="0.15" text-anchor="middle" >14</text>
<text transform="matrix(1.06 0 0 1 41.6 461.8)" font-size="16.8" fill="#000" >00:00:00</text>
<text transform="matrix(1.06 0 0 1 185.8 461.8)" font-size="16.8" fill="#000" text-anchor="end" >1840,8</text>
<text transform="matrix(1.06 0 0 1 264.8 461.8)" font-size="16.8" fill="#000" text-anchor="end" >1840,6</text>
<text transform="matrix(1.06 0 0 1 329.8 461.8)" font-size="16.8" fill="#000" text-anchor="end" >1334</text>
<text transform="matrix(1.06 0 0 1 394.8 461.8)" font-size="16.8" fill="#000" text-anchor="end" >1292</text>
<text transform="matrix(1.06 0 0 1 499.8 461.8)" font-size="16.8" fill="#000" text-anchor="end" >1840,4</text>
<text transform="matrix(1.06 0 0 1 590.8 461.8)" font-size="16.8" fill="#000" text-anchor="end" >1333,9</text>
<text transform="matrix(1.06 0 0 1 677.8 461.8)" font-size="16.8" fill="#000" text-anchor="end" >1292,2</text>
<text transform="matrix(1.06 0 0 1 798.8 461.8)" font-size="16.8" fill="#000" text-anchor="end" >89</text>
<text transform="matrix(1.06 0 0 1 879.8 461.8)" font-size="16.8" fill="#000" text-anchor="end" >65,2</text>
<text transform="matrix(1.06 0 0 1 945.8 461.8)" font-size="16.8" fill="#000" text-anchor="end" >34,2</text>
<text transform="matrix(1.06 0 0 1 1020.8 461.8)" font-size="16.8" fill="#000" text-anchor="end" >1</text>
<text transform="matrix(1.06 0 0 1 1095.8 461.8)" font-size="16.8" fill="#000" text-anchor="end" >1</text>
<text transform="matrix(1.06 0 0 1 1195.8 461.8)" font-size="16.8" fill="#000" text-anchor="end" >1840,6</text>
<text transform="matrix(1.06 0 0 1 1302.8 461.8)" font-size="16.8" fill="#000" text-anchor="end" >1840,4</text>
<text transform="matrix(1.06 0 0 1 1449.8 461.8)" font-size="16.8" fill="#000" text-anchor="end" >89</text>
<text transform="matrix(1.06 0 0 1 1524.8 461.8)" font-size="16.8" fill="#000" text-anchor="end" >1</text>
<text transform="matrix(1.06 0 0 1 1707.8 461.8)" font-size="16.8" fill="#000" text-anchor="end" >-100</text>
<text transform="matrix(1.06 0 0 1 1790.8 461.8)" font-size="16.8" fill="#000" text-anchor="end" >0</text>
<text transform="matrix(0.9 0 0 1 18.6 486.8)" font-size="17.5" fill="#f0f0f0" stroke="#f0f0f0" stroke-width="0.15" text-anchor="middle" >15</text>
<text transform="matrix(1.06 0 0 1 41.6 486.8)" font-size="16.8" fill="#000" >00:00:00</text>
<text transform="matrix(1.06 0 0 1 185.8 486.8)" font-size="16.8" fill="#000" text-anchor="end" >1840,8</text>
<text transform="matrix(1.06 0 0 1 264.8 486.8)" font-size="16.8" fill="#000" text-anchor="end" >1840,6</text>
<text transform="matrix(1.06 0 0 1 329.8 486.8)" font-size="16.8" fill="#000" text-anchor="end" >1334</text>
<text transform="matrix(1.06 0 0 1 394.8 486.8)" font-size="16.8" fill="#000" text-anchor="end" >1292</text>
<text transform="matrix(1.06 0 0 1 499.8 486.8)" font-size="16.8" fill="#000" text-anchor="end" >1840,6</text>
<text transform="matrix(1.06 0 0 1 590.8 486.8)" font-size="16.8" fill="#000" text-anchor="end" >1333,8</text>
<text transform="matrix(1.06 0 0 1 677.8 486.8)" font-size="16.8" fill="#000" text-anchor="end" >1292,1</text>
<text transform="matrix(1.06 0 0 1 798.8 486.8)" font-size="16.8" fill="#000" text-anchor="end" >89</text>
<text transform="matrix(1.06 0 0 1 879.8 486.8)" font-size="16.8" fill="#000" text-anchor="end" >65,2</text>
<text transform="matrix(1.06 0 0 1 945.8 486.8)" font-size="16.8" fill="#000" text-anchor="end" >34,2</text>
<text transform="matrix(1.06 0 0 1 1020.8 486.8)" font-size="16.8" fill="#000" text-anchor="end" >1</text>
<text transform="matrix(1.06 0 0 1 1095.8 486.8)" font-size="16.8" fill="#000" text-anchor="end" >1</text>
<text transform="matrix(1.06 0 0 1 1195.8 486.8)" font-size="16.8" fill="#000" text-anchor="end" >1840,6</text>
<text transform="matrix(1.06 0 0 1 1302.8 486.8)" font-size="16.8" fill="#000" text-anchor="end" >1840,6</text>
<text transform="matrix(1.06 0 0 1 1449.8 486.8)" font-size="16.8" fill="#000" text-anchor="end" >89</text>
<text transform="matrix(1.06 0 0 1 1524.8 486.8)" font-size="16.8" fill="#000" text-anchor="end" >1</text>
<text transform="matrix(1.06 0 0 1 1707.8 486.8)" font-size="16.8" fill="#000" text-anchor="end" >-100</text>
<text transform="matrix(1.06 0 0 1 1790.8 486.8)" font-size="16.8" fill="#000" text-anchor="end" >0,02</text>
<text transform="matrix(0.9 0 0 1 18.6 511.8)" font-size="17.5" fill="#f0f0f0" stroke="#f0f0f0" stroke-width="0.15" text-anchor="middle" >16</text>
<text transform="matrix(1.06 0 0 1 41.6 511.8)" font-size="16.8" fill="#000" >00:00:00</text>
<text transform="matrix(1.06 0 0 1 185.8 511.8)" font-size="16.8" fill="#000" text-anchor="end" >1840,8</text>
<text transform="matrix(1.06 0 0 1 264.8 511.8)" font-size="16.8" fill="#000" text-anchor="end" >1840,7</text>
<text transform="matrix(1.06 0 0 1 329.8 511.8)" font-size="16.8" fill="#000" text-anchor="end" >1334</text>
<text transform="matrix(1.06 0 0 1 394.8 511.8)" font-size="16.8" fill="#000" text-anchor="end" >1292</text>
<text transform="matrix(1.06 0 0 1 499.8 511.8)" font-size="16.8" fill="#000" text-anchor="end" >1840,9</text>
<text transform="matrix(1.06 0 0 1 590.8 511.8)" font-size="16.8" fill="#000" text-anchor="end" >1333,7</text>
<text transform="matrix(1.06 0 0 1 677.8 511.8)" font-size="16.8" fill="#000" text-anchor="end" >1292,1</text>
<text transform="matrix(1.06 0 0 1 798.8 511.8)" font-size="16.8" fill="#000" text-anchor="end" >89</text>
<text transform="matrix(1.06 0 0 1 879.8 511.8)" font-size="16.8" fill="#000" text-anchor="end" >65,2</text>
<text transform="matrix(1.06 0 0 1 945.8 511.8)" font-size="16.8" fill="#000" text-anchor="end" >34,2</text>
<text transform="matrix(1.06 0 0 1 1020.8 511.8)" font-size="16.8" fill="#000" text-anchor="end" >1</text>
<text transform="matrix(1.06 0 0 1 1095.8 511.8)" font-size="16.8" fill="#000" text-anchor="end" >1</text>
<text transform="matrix(1.06 0 0 1 1195.8 511.8)" font-size="16.8" fill="#000" text-anchor="end" >1840,7</text>
<text transform="matrix(1.06 0 0 1 1302.8 511.8)" font-size="16.8" fill="#000" text-anchor="end" >1840,9</text>
<text transform="matrix(1.06 0 0 1 1449.8 511.8)" font-size="16.8" fill="#000" text-anchor="end" >89</text>
<text transform="matrix(1.06 0 0 1 1524.8 511.8)" font-size="16.8" fill="#000" text-anchor="end" >1</text>
<text transform="matrix(1.06 0 0 1 1707.8 511.8)" font-size="16.8" fill="#000" text-anchor="end" >-100</text>
<text transform="matrix(1.06 0 0 1 1790.8 511.8)" font-size="16.8" fill="#000" text-anchor="end" >0,039</text>
<text transform="matrix(0.9 0 0 1 18.6 536.8)" font-size="17.5" fill="#f0f0f0" stroke="#f0f0f0" stroke-width="0.15" text-anchor="middle" >17</text>
<text transform="matrix(1.06 0 0 1 41.6 536.8)" font-size="16.8" fill="#000" >00:00:00</text>
<text transform="matrix(1.06 0 0 1 185.8 536.8)" font-size="16.8" fill="#000" text-anchor="end" >1840,8</text>
<text transform="matrix(1.06 0 0 1 264.8 536.8)" font-size="16.8" fill="#000" text-anchor="end" >1840,6</text>
<text transform="matrix(1.06 0 0 1 329.8 536.8)" font-size="16.8" fill="#000" text-anchor="end" >1334</text>
<text transform="matrix(1.06 0 0 1 394.8 536.8)" font-size="16.8" fill="#000" text-anchor="end" >1292</text>
<text transform="matrix(1.06 0 0 1 499.8 536.8)" font-size="16.8" fill="#000" text-anchor="end" >1840,5</text>
<text transform="matrix(1.06 0 0 1 590.8 536.8)" font-size="16.8" fill="#000" text-anchor="end" >1333,7</text>
<text transform="matrix(1.06 0 0 1 677.8 536.8)" font-size="16.8" fill="#000" text-anchor="end" >1292</text>
<text transform="matrix(1.06 0 0 1 798.8 536.8)" font-size="16.8" fill="#000" text-anchor="end" >89</text>
<text transform="matrix(1.06 0 0 1 879.8 536.8)" font-size="16.8" fill="#000" text-anchor="end" >65,2</text>
<text transform="matrix(1.06 0 0 1 945.8 536.8)" font-size="16.8" fill="#000" text-anchor="end" >34,2</text>
<text transform="matrix(1.06 0 0 1 1020.8 536.8)" font-size="16.8" fill="#000" text-anchor="end" >1</text>
<text transform="matrix(1.06 0 0 1 1095.8 536.8)" font-size="16.8" fill="#000" text-anchor="end" >1</text>
<text transform="matrix(1.06 0 0 1 1195.8 536.8)" font-size="16.8" fill="#000" text-anchor="end" >1840,6</text>
<text transform="matrix(1.06 0 0 1 1302.8 536.8)" font-size="16.8" fill="#000" text-anchor="end" >1840,5</text>
<text transform="matrix(1.06 0 0 1 1449.8 536.8)" font-size="16.8" fill="#000" text-anchor="end" >89</text>
<text transform="matrix(1.06 0 0 1 1524.8 536.8)" font-size="16.8" fill="#000" text-anchor="end" >1</text>
<text transform="matrix(1.06 0 0 1 1707.8 536.8)" font-size="16.8" fill="#000" text-anchor="end" >-100</text>
<text transform="matrix(1.06 0 0 1 1790.8 536.8)" font-size="16.8" fill="#000" text-anchor="end" >0,028</text>
<text transform="matrix(0.9 0 0 1 18.6 561.8)" font-size="17.5" fill="#f0f0f0" stroke="#f0f0f0" stroke-width="0.15" text-anchor="middle" >18</text>
<text transform="matrix(1.06 0 0 1 41.6 561.8)" font-size="16.8" fill="#000" >00:00:01</text>
<text transform="matrix(1.06 0 0 1 185.8 561.8)" font-size="16.8" fill="#000" text-anchor="end" >1840,8</text>
<text transform="matrix(1.06 0 0 1 264.8 561.8)" font-size="16.8" fill="#000" text-anchor="end" >1840,6</text>
<text transform="matrix(1.06 0 0 1 329.8 561.8)" font-size="16.8" fill="#000" text-anchor="end" >1334</text>
<text transform="matrix(1.06 0 0 1 394.8 561.8)" font-size="16.8" fill="#000" text-anchor="end" >1292</text>
<text transform="matrix(1.06 0 0 1 499.8 561.8)" font-size="16.8" fill="#000" text-anchor="end" >1841,2</text>
<text transform="matrix(1.06 0 0 1 590.8 561.8)" font-size="16.8" fill="#000" text-anchor="end" >1333,7</text>
<text transform="matrix(1.06 0 0 1 677.8 561.8)" font-size="16.8" fill="#000" text-anchor="end" >1292,1</text>
<text transform="matrix(1.06 0 0 1 798.8 561.8)" font-size="16.8" fill="#000" text-anchor="end" >89</text>
<text transform="matrix(1.06 0 0 1 879.8 561.8)" font-size="16.8" fill="#000" text-anchor="end" >65,2</text>
<text transform="matrix(1.06 0 0 1 945.8 561.8)" font-size="16.8" fill="#000" text-anchor="end" >34,2</text>
<text transform="matrix(1.06 0 0 1 1020.8 561.8)" font-size="16.8" fill="#000" text-anchor="end" >1</text>
<text transform="matrix(1.06 0 0 1 1095.8 561.8)" font-size="16.8" fill="#000" text-anchor="end" >1</text>
<text transform="matrix(1.06 0 0 1 1195.8 561.8)" font-size="16.8" fill="#000" text-anchor="end" >1840,6</text>
<text transform="matrix(1.06 0 0 1 1302.8 561.8)" font-size="16.8" fill="#000" text-anchor="end" >1841,2</text>
<text transform="matrix(1.06 0 0 1 1449.8 561.8)" font-size="16.8" fill="#000" text-anchor="end" >89</text>
<text transform="matrix(1.06 0 0 1 1524.8 561.8)" font-size="16.8" fill="#000" text-anchor="end" >1</text>
<text transform="matrix(1.06 0 0 1 1707.8 561.8)" font-size="16.8" fill="#000" text-anchor="end" >-100</text>
<text transform="matrix(1.06 0 0 1 1790.8 561.8)" font-size="16.8" fill="#000" text-anchor="end" >0,017</text>
<text transform="matrix(0.9 0 0 1 18.6 586.8)" font-size="17.5" fill="#f0f0f0" stroke="#f0f0f0" stroke-width="0.15" text-anchor="middle" >19</text>
<text transform="matrix(1.06 0 0 1 41.6 586.8)" font-size="16.8" fill="#000" >00:00:01</text>
<text transform="matrix(1.06 0 0 1 185.8 586.8)" font-size="16.8" fill="#000" text-anchor="end" >1840,8</text>
<text transform="matrix(1.06 0 0 1 264.8 586.8)" font-size="16.8" fill="#000" text-anchor="end" >1840,5</text>
<text transform="matrix(1.06 0 0 1 329.8 586.8)" font-size="16.8" fill="#000" text-anchor="end" >1334</text>
<text transform="matrix(1.06 0 0 1 394.8 586.8)" font-size="16.8" fill="#000" text-anchor="end" >1292</text>
<text transform="matrix(1.06 0 0 1 499.8 586.8)" font-size="16.8" fill="#000" text-anchor="end" >1840,5</text>
<text transform="matrix(1.06 0 0 1 590.8 586.8)" font-size="16.8" fill="#000" text-anchor="end" >1333,8</text>
<text transform="matrix(1.06 0 0 1 677.8 586.8)" font-size="16.8" fill="#000" text-anchor="end" >1292,1</text>
<text transform="matrix(1.06 0 0 1 798.8 586.8)" font-size="16.8" fill="#000" text-anchor="end" >89</text>
<text transform="matrix(1.06 0 0 1 879.8 586.8)" font-size="16.8" fill="#000" text-anchor="end" >65,2</text>
<text transform="matrix(1.06 0 0 1 945.8 586.8)" font-size="16.8" fill="#000" text-anchor="end" >34,2</text>
<text transform="matrix(1.06 0 0 1 1020.8 586.8)" font-size="16.8" fill="#000" text-anchor="end" >1</text>
<text transform="matrix(1.06 0 0 1 1095.8 586.8)" font-size="16.8" fill="#000" text-anchor="end" >1</text>
<text transform="matrix(1.06 0 0 1 1195.8 586.8)" font-size="16.8" fill="#000" text-anchor="end" >1840,5</text>
<text transform="matrix(1.06 0 0 1 1302.8 586.8)" font-size="16.8" fill="#000" text-anchor="end" >1840,5</text>
<text transform="matrix(1.06 0 0 1 1449.8 586.8)" font-size="16.8" fill="#000" text-anchor="end" >89</text>
<text transform="matrix(1.06 0 0 1 1524.8 586.8)" font-size="16.8" fill="#000" text-anchor="end" >1</text>
<text transform="matrix(1.06 0 0 1 1707.8 586.8)" font-size="16.8" fill="#000" text-anchor="end" >-100</text>
<text transform="matrix(1.06 0 0 1 1790.8 586.8)" font-size="16.8" fill="#000" text-anchor="end" >0,177</text>
<text transform="matrix(0.9 0 0 1 18.6 611.8)" font-size="17.5" fill="#f0f0f0" stroke="#f0f0f0" stroke-width="0.15" text-anchor="middle" >20</text>
<text transform="matrix(1.06 0 0 1 41.6 611.8)" font-size="16.8" fill="#000" >00:00:01</text>
<text transform="matrix(1.06 0 0 1 185.8 611.8)" font-size="16.8" fill="#000" text-anchor="end" >1840,8</text>
<text transform="matrix(1.06 0 0 1 264.8 611.8)" font-size="16.8" fill="#000" text-anchor="end" >1840,3</text>
<text transform="matrix(1.06 0 0 1 329.8 611.8)" font-size="16.8" fill="#000" text-anchor="end" >1334</text>
<text transform="matrix(1.06 0 0 1 394.8 611.8)" font-size="16.8" fill="#000" text-anchor="end" >1292</text>
<text transform="matrix(1.06 0 0 1 499.8 611.8)" font-size="16.8" fill="#000" text-anchor="end" >1840,2</text>
<text transform="matrix(1.06 0 0 1 590.8 611.8)" font-size="16.8" fill="#000" text-anchor="end" >1333,7</text>
<text transform="matrix(1.06 0 0 1 677.8 611.8)" font-size="16.8" fill="#000" text-anchor="end" >1292,1</text>
<text transform="matrix(1.06 0 0 1 798.8 611.8)" font-size="16.8" fill="#000" text-anchor="end" >89</text>
<text transform="matrix(1.06 0 0 1 879.8 611.8)" font-size="16.8" fill="#000" text-anchor="end" >65,2</text>
<text transform="matrix(1.06 0 0 1 945.8 611.8)" font-size="16.8" fill="#000" text-anchor="end" >34,2</text>
<text transform="matrix(1.06 0 0 1 1020.8 611.8)" font-size="16.8" fill="#000" text-anchor="end" >1</text>
<text transform="matrix(1.06 0 0 1 1095.8 611.8)" font-size="16.8" fill="#000" text-anchor="end" >1</text>
<text transform="matrix(1.06 0 0 1 1195.8 611.8)" font-size="16.8" fill="#000" text-anchor="end" >1840,3</text>
<text transform="matrix(1.06 0 0 1 1302.8 611.8)" font-size="16.8" fill="#000" text-anchor="end" >1840,2</text>
<text transform="matrix(1.06 0 0 1 1449.8 611.8)" font-size="16.8" fill="#000" text-anchor="end" >89</text>
<text transform="matrix(1.06 0 0 1 1524.8 611.8)" font-size="16.8" fill="#000" text-anchor="end" >1</text>
<text transform="matrix(1.06 0 0 1 1707.8 611.8)" font-size="16.8" fill="#000" text-anchor="end" >-100</text>
<text transform="matrix(1.06 0 0 1 1790.8 611.8)" font-size="16.8" fill="#000" text-anchor="end" >0,015</text>
<text transform="matrix(0.9 0 0 1 18.6 636.8)" font-size="17.5" fill="#f0f0f0" stroke="#f0f0f0" stroke-width="0.15" text-anchor="middle" >21</text>
<text transform="matrix(1.06 0 0 1 41.6 636.8)" font-size="16.8" fill="#000" >00:00:01</text>
<text transform="matrix(1.06 0 0 1 185.8 636.8)" font-size="16.8" fill="#000" text-anchor="end" >1840,8</text>
<text transform="matrix(1.06 0 0 1 264.8 636.8)" font-size="16.8" fill="#000" text-anchor="end" >1840,5</text>
<text transform="matrix(1.06 0 0 1 329.8 636.8)" font-size="16.8" fill="#000" text-anchor="end" >1334</text>
<text transform="matrix(1.06 0 0 1 394.8 636.8)" font-size="16.8" fill="#000" text-anchor="end" >1292</text>
<text transform="matrix(1.06 0 0 1 499.8 636.8)" font-size="16.8" fill="#000" text-anchor="end" >1841,4</text>
<text transform="matrix(1.06 0 0 1 590.8 636.8)" font-size="16.8" fill="#000" text-anchor="end" >1333,7</text>
<text transform="matrix(1.06 0 0 1 677.8 636.8)" font-size="16.8" fill="#000" text-anchor="end" >1292</text>
<text transform="matrix(1.06 0 0 1 798.8 636.8)" font-size="16.8" fill="#000" text-anchor="end" >89</text>
<text transform="matrix(1.06 0 0 1 879.8 636.8)" font-size="16.8" fill="#000" text-anchor="end" >65,2</text>
<text transform="matrix(1.06 0 0 1 945.8 636.8)" font-size="16.8" fill="#000" text-anchor="end" >34,2</text>
<text transform="matrix(1.06 0 0 1 1020.8 636.8)" font-size="16.8" fill="#000" text-anchor="end" >1</text>
<text transform="matrix(1.06 0 0 1 1095.8 636.8)" font-size="16.8" fill="#000" text-anchor="end" >1</text>
<text transform="matrix(1.06 0 0 1 1195.8 636.8)" font-size="16.8" fill="#000" text-anchor="end" >1840,5</text>
<text transform="matrix(1.06 0 0 1 1302.8 636.8)" font-size="16.8" fill="#000" text-anchor="end" >1841,4</text>
<text transform="matrix(1.06 0 0 1 1449.8 636.8)" font-size="16.8" fill="#000" text-anchor="end" >89</text>
<text transform="matrix(1.06 0 0 1 1524.8 636.8)" font-size="16.8" fill="#000" text-anchor="end" >1</text>
<text transform="matrix(1.06 0 0 1 1707.8 636.8)" font-size="16.8" fill="#000" text-anchor="end" >-100</text>
<text transform="matrix(1.06 0 0 1 1790.8 636.8)" font-size="16.8" fill="#000" text-anchor="end" >0,016</text>
<text transform="matrix(0.9 0 0 1 18.6 661.8)" font-size="17.5" fill="#f0f0f0" stroke="#f0f0f0" stroke-width="0.15" text-anchor="middle" >22</text>
<text transform="matrix(1.06 0 0 1 41.6 661.8)" font-size="16.8" fill="#000" >00:00:01</text>
<text transform="matrix(1.06 0 0 1 185.8 661.8)" font-size="16.8" fill="#000" text-anchor="end" >1840,8</text>
<text transform="matrix(1.06 0 0 1 264.8 661.8)" font-size="16.8" fill="#000" text-anchor="end" >1840,6</text>
<text transform="matrix(1.06 0 0 1 329.8 661.8)" font-size="16.8" fill="#000" text-anchor="end" >1334</text>
<text transform="matrix(1.06 0 0 1 394.8 661.8)" font-size="16.8" fill="#000" text-anchor="end" >1292</text>
<text transform="matrix(1.06 0 0 1 499.8 661.8)" font-size="16.8" fill="#000" text-anchor="end" >1840,1</text>
<text transform="matrix(1.06 0 0 1 590.8 661.8)" font-size="16.8" fill="#000" text-anchor="end" >1333,8</text>
<text transform="matrix(1.06 0 0 1 677.8 661.8)" font-size="16.8" fill="#000" text-anchor="end" >1292,1</text>
<text transform="matrix(1.06 0 0 1 798.8 661.8)" font-size="16.8" fill="#000" text-anchor="end" >89</text>
<text transform="matrix(1.06 0 0 1 879.8 661.8)" font-size="16.8" fill="#000" text-anchor="end" >65,2</text>
<text transform="matrix(1.06 0 0 1 945.8 661.8)" font-size="16.8" fill="#000" text-anchor="end" >34,2</text>
<text transform="matrix(1.06 0 0 1 1020.8 661.8)" font-size="16.8" fill="#000" text-anchor="end" >1</text>
<text transform="matrix(1.06 0 0 1 1095.8 661.8)" font-size="16.8" fill="#000" text-anchor="end" >1</text>
<text transform="matrix(1.06 0 0 1 1195.8 661.8)" font-size="16.8" fill="#000" text-anchor="end" >1840,6</text>
<text transform="matrix(1.06 0 0 1 1302.8 661.8)" font-size="16.8" fill="#000" text-anchor="end" >1840,1</text>
<text transform="matrix(1.06 0 0 1 1449.8 661.8)" font-size="16.8" fill="#000" text-anchor="end" >89</text>
<text transform="matrix(1.06 0 0 1 1524.8 661.8)" font-size="16.8" fill="#000" text-anchor="end" >1</text>
<text transform="matrix(1.06 0 0 1 1707.8 661.8)" font-size="16.8" fill="#000" text-anchor="end" >-100</text>
<text transform="matrix(1.06 0 0 1 1790.8 661.8)" font-size="16.8" fill="#000" text-anchor="end" >0,311</text>
<text transform="matrix(0.9 0 0 1 18.6 686.8)" font-size="17.5" fill="#f0f0f0" stroke="#f0f0f0" stroke-width="0.15" text-anchor="middle" >23</text>
<text transform="matrix(1.06 0 0 1 41.6 686.8)" font-size="16.8" fill="#000" >00:00:01</text>
<text transform="matrix(1.06 0 0 1 185.8 686.8)" font-size="16.8" fill="#000" text-anchor="end" >1840,8</text>
<text transform="matrix(1.06 0 0 1 264.8 686.8)" font-size="16.8" fill="#000" text-anchor="end" >1840,7</text>
<text transform="matrix(1.06 0 0 1 329.8 686.8)" font-size="16.8" fill="#000" text-anchor="end" >1334</text>
<text transform="matrix(1.06 0 0 1 394.8 686.8)" font-size="16.8" fill="#000" text-anchor="end" >1292</text>
<text transform="matrix(1.06 0 0 1 499.8 686.8)" font-size="16.8" fill="#000" text-anchor="end" >1841</text>
<text transform="matrix(1.06 0 0 1 590.8 686.8)" font-size="16.8" fill="#000" text-anchor="end" >1333,8</text>
<text transform="matrix(1.06 0 0 1 677.8 686.8)" font-size="16.8" fill="#000" text-anchor="end" >1292,1</text>
<text transform="matrix(1.06 0 0 1 798.8 686.8)" font-size="16.8" fill="#000" text-anchor="end" >89</text>
<text transform="matrix(1.06 0 0 1 879.8 686.8)" font-size="16.8" fill="#000" text-anchor="end" >65,2</text>
<text transform="matrix(1.06 0 0 1 945.8 686.8)" font-size="16.8" fill="#000" text-anchor="end" >34,2</text>
<text transform="matrix(1.06 0 0 1 1020.8 686.8)" font-size="16.8" fill="#000" text-anchor="end" >1</text>
<text transform="matrix(1.06 0 0 1 1095.8 686.8)" font-size="16.8" fill="#000" text-anchor="end" >1</text>
<text transform="matrix(1.06 0 0 1 1195.8 686.8)" font-size="16.8" fill="#000" text-anchor="end" >1840,7</text>
<text transform="matrix(1.06 0 0 1 1302.8 686.8)" font-size="16.8" fill="#000" text-anchor="end" >1841</text>
<text transform="matrix(1.06 0 0 1 1449.8 686.8)" font-size="16.8" fill="#000" text-anchor="end" >89</text>
<text transform="matrix(1.06 0 0 1 1524.8 686.8)" font-size="16.8" fill="#000" text-anchor="end" >1</text>
<text transform="matrix(1.06 0 0 1 1707.8 686.8)" font-size="16.8" fill="#000" text-anchor="end" >-100</text>
<text transform="matrix(1.06 0 0 1 1790.8 686.8)" font-size="16.8" fill="#000" text-anchor="end" >0</text>
<text transform="matrix(0.9 0 0 1 18.6 711.8)" font-size="17.5" fill="#f0f0f0" stroke="#f0f0f0" stroke-width="0.15" text-anchor="middle" >24</text>
<text transform="matrix(1.06 0 0 1 41.6 711.8)" font-size="16.8" fill="#000" >00:00:01</text>
<text transform="matrix(1.06 0 0 1 185.8 711.8)" font-size="16.8" fill="#000" text-anchor="end" >1840,8</text>
<text transform="matrix(1.06 0 0 1 264.8 711.8)" font-size="16.8" fill="#000" text-anchor="end" >1840,5</text>
<text transform="matrix(1.06 0 0 1 329.8 711.8)" font-size="16.8" fill="#000" text-anchor="end" >1334</text>
<text transform="matrix(1.06 0 0 1 394.8 711.8)" font-size="16.8" fill="#000" text-anchor="end" >1292</text>
<text transform="matrix(1.06 0 0 1 499.8 711.8)" font-size="16.8" fill="#000" text-anchor="end" >1841,1</text>
<text transform="matrix(1.06 0 0 1 590.8 711.8)" font-size="16.8" fill="#000" text-anchor="end" >1333,7</text>
<text transform="matrix(1.06 0 0 1 677.8 711.8)" font-size="16.8" fill="#000" text-anchor="end" >1292</text>
<text transform="matrix(1.06 0 0 1 798.8 711.8)" font-size="16.8" fill="#000" text-anchor="end" >89</text>
<text transform="matrix(1.06 0 0 1 879.8 711.8)" font-size="16.8" fill="#000" text-anchor="end" >65,2</text>
<text transform="matrix(1.06 0 0 1 945.8 711.8)" font-size="16.8" fill="#000" text-anchor="end" >34,2</text>
<text transform="matrix(1.06 0 0 1 1020.8 711.8)" font-size="16.8" fill="#000" text-anchor="end" >1</text>
<text transform="matrix(1.06 0 0 1 1095.8 711.8)" font-size="16.8" fill="#000" text-anchor="end" >1</text>
<text transform="matrix(1.06 0 0 1 1195.8 711.8)" font-size="16.8" fill="#000" text-anchor="end" >1840,5</text>
<text transform="matrix(1.06 0 0 1 1302.8 711.8)" font-size="16.8" fill="#000" text-anchor="end" >1841,1</text>
<text transform="matrix(1.06 0 0 1 1449.8 711.8)" font-size="16.8" fill="#000" text-anchor="end" >89</text>
<text transform="matrix(1.06 0 0 1 1524.8 711.8)" font-size="16.8" fill="#000" text-anchor="end" >1</text>
<text transform="matrix(1.06 0 0 1 1707.8 711.8)" font-size="16.8" fill="#000" text-anchor="end" >-100</text>
<text transform="matrix(1.06 0 0 1 1790.8 711.8)" font-size="16.8" fill="#000" text-anchor="end" >0,011</text>
<text transform="matrix(0.9 0 0 1 18.6 736.8)" font-size="17.5" fill="#f0f0f0" stroke="#f0f0f0" stroke-width="0.15" text-anchor="middle" >25</text>
<text transform="matrix(1.06 0 0 1 41.6 736.8)" font-size="16.8" fill="#000" >00:00:01</text>
<text transform="matrix(1.06 0 0 1 185.8 736.8)" font-size="16.8" fill="#000" text-anchor="end" >1840,8</text>
<text transform="matrix(1.06 0 0 1 264.8 736.8)" font-size="16.8" fill="#000" text-anchor="end" >1840,7</text>
<text transform="matrix(1.06 0 0 1 329.8 736.8)" font-size="16.8" fill="#000" text-anchor="end" >1334</text>
<text transform="matrix(1.06 0 0 1 394.8 736.8)" font-size="16.8" fill="#000" text-anchor="end" >1292</text>
<text transform="matrix(1.06 0 0 1 499.8 736.8)" font-size="16.8" fill="#000" text-anchor="end" >1840,8</text>
<text transform="matrix(1.06 0 0 1 590.8 736.8)" font-size="16.8" fill="#000" text-anchor="end" >1333,6</text>
<text transform="matrix(1.06 0 0 1 677.8 736.8)" font-size="16.8" fill="#000" text-anchor="end" >1291,9</text>
<text transform="matrix(1.06 0 0 1 798.8 736.8)" font-size="16.8" fill="#000" text-anchor="end" >89</text>
<text transform="matrix(1.06 0 0 1 879.8 736.8)" font-size="16.8" fill="#000" text-anchor="end" >65,2</text>
<text transform="matrix(1.06 0 0 1 945.8 736.8)" font-size="16.8" fill="#000" text-anchor="end" >34,2</text>
<text transform="matrix(1.06 0 0 1 1020.8 736.8)" font-size="16.8" fill="#000" text-anchor="end" >1</text>
<text transform="matrix(1.06 0 0 1 1095.8 736.8)" font-size="16.8" fill="#000" text-anchor="end" >1</text>
<text transform="matrix(1.06 0 0 1 1195.8 736.8)" font-size="16.8" fill="#000" text-anchor="end" >1840,7</text>
<text transform="matrix(1.06 0 0 1 1302.8 736.8)" font-size="16.8" fill="#000" text-anchor="end" >1840,8</text>
<text transform="matrix(1.06 0 0 1 1449.8 736.8)" font-size="16.8" fill="#000" text-anchor="end" >89</text>
<text transform="matrix(1.06 0 0 1 1524.8 736.8)" font-size="16.8" fill="#000" text-anchor="end" >1</text>
<text transform="matrix(1.06 0 0 1 1707.8 736.8)" font-size="16.8" fill="#000" text-anchor="end" >-100</text>
<text transform="matrix(1.06 0 0 1 1790.8 736.8)" font-size="16.8" fill="#000" text-anchor="end" >0,045</text>
<text transform="matrix(0.9 0 0 1 18.6 761.8)" font-size="17.5" fill="#f0f0f0" stroke="#f0f0f0" stroke-width="0.15" text-anchor="middle" >26</text>
<text transform="matrix(1.06 0 0 1 41.6 761.8)" font-size="16.8" fill="#000" >00:00:01</text>
<text transform="matrix(1.06 0 0 1 185.8 761.8)" font-size="16.8" fill="#000" text-anchor="end" >1840,8</text>
<text transform="matrix(1.06 0 0 1 264.8 761.8)" font-size="16.8" fill="#000" text-anchor="end" >1840,5</text>
<text transform="matrix(1.06 0 0 1 329.8 761.8)" font-size="16.8" fill="#000" text-anchor="end" >1334</text>
<text transform="matrix(1.06 0 0 1 394.8 761.8)" font-size="16.8" fill="#000" text-anchor="end" >1292</text>
<text transform="matrix(1.06 0 0 1 499.8 761.8)" font-size="16.8" fill="#000" text-anchor="end" >1840,7</text>
<text transform="matrix(1.06 0 0 1 590.8 761.8)" font-size="16.8" fill="#000" text-anchor="end" >1333,8</text>
<text transform="matrix(1.06 0 0 1 677.8 761.8)" font-size="16.8" fill="#000" text-anchor="end" >1292,2</text>
<text transform="matrix(1.06 0 0 1 798.8 761.8)" font-size="16.8" fill="#000" text-anchor="end" >89</text>
<text transform="matrix(1.06 0 0 1 879.8 761.8)" font-size="16.8" fill="#000" text-anchor="end" >65,2</text>
<text transform="matrix(1.06 0 0 1 945.8 761.8)" font-size="16.8" fill="#000" text-anchor="end" >34,2</text>
<text transform="matrix(1.06 0 0 1 1020.8 761.8)" font-size="16.8" fill="#000" text-anchor="end" >1</text>
<text transform="matrix(1.06 0 0 1 1095.8 761.8)" font-size="16.8" fill="#000" text-anchor="end" >1</text>
<text transform="matrix(1.06 0 0 1 1195.8 761.8)" font-size="16.8" fill="#000" text-anchor="end" >1840,5</text>
<text transform="matrix(1.06 0 0 1 1302.8 761.8)" font-size="16.8" fill="#000" text-anchor="end" >1840,7</text>
<text transform="matrix(1.06 0 0 1 1449.8 761.8)" font-size="16.8" fill="#000" text-anchor="end" >89</text>
<text transform="matrix(1.06 0 0 1 1524.8 761.8)" font-size="16.8" fill="#000" text-anchor="end" >1</text>
<text transform="matrix(1.06 0 0 1 1707.8 761.8)" font-size="16.8" fill="#000" text-anchor="end" >-100</text>
<text transform="matrix(1.06 0 0 1 1790.8 761.8)" font-size="16.8" fill="#000" text-anchor="end" >0</text>
<text transform="matrix(0.9 0 0 1 18.6 786.8)" font-size="17.5" fill="#f0f0f0" stroke="#f0f0f0" stroke-width="0.15" text-anchor="middle" >27</text>
<text transform="matrix(1.06 0 0 1 41.6 786.8)" font-size="16.8" fill="#000" >00:00:01</text>
<text transform="matrix(1.06 0 0 1 185.8 786.8)" font-size="16.8" fill="#000" text-anchor="end" >1840,8</text>
<text transform="matrix(1.06 0 0 1 264.8 786.8)" font-size="16.8" fill="#000" text-anchor="end" >1840,6</text>
<text transform="matrix(1.06 0 0 1 329.8 786.8)" font-size="16.8" fill="#000" text-anchor="end" >1334</text>
<text transform="matrix(1.06 0 0 1 394.8 786.8)" font-size="16.8" fill="#000" text-anchor="end" >1292</text>
<text transform="matrix(1.06 0 0 1 499.8 786.8)" font-size="16.8" fill="#000" text-anchor="end" >1839,9</text>
<text transform="matrix(1.06 0 0 1 590.8 786.8)" font-size="16.8" fill="#000" text-anchor="end" >1333,9</text>
<text transform="matrix(1.06 0 0 1 677.8 786.8)" font-size="16.8" fill="#000" text-anchor="end" >1292,3</text>
<text transform="matrix(1.06 0 0 1 798.8 786.8)" font-size="16.8" fill="#000" text-anchor="end" >89</text>
<text transform="matrix(1.06 0 0 1 879.8 786.8)" font-size="16.8" fill="#000" text-anchor="end" >65,2</text>
<text transform="matrix(1.06 0 0 1 945.8 786.8)" font-size="16.8" fill="#000" text-anchor="end" >34,2</text>
<text transform="matrix(1.06 0 0 1 1020.8 786.8)" font-size="16.8" fill="#000" text-anchor="end" >1</text>
<text transform="matrix(1.06 0 0 1 1095.8 786.8)" font-size="16.8" fill="#000" text-anchor="end" >1</text>
<text transform="matrix(1.06 0 0 1 1195.8 786.8)" font-size="16.8" fill="#000" text-anchor="end" >1840,6</text>
<text transform="matrix(1.06 0 0 1 1302.8 786.8)" font-size="16.8" fill="#000" text-anchor="end" >1839,9</text>
<text transform="matrix(1.06 0 0 1 1449.8 786.8)" font-size="16.8" fill="#000" text-anchor="end" >89</text>
<text transform="matrix(1.06 0 0 1 1524.8 786.8)" font-size="16.8" fill="#000" text-anchor="end" >1</text>
<text transform="matrix(1.06 0 0 1 1707.8 786.8)" font-size="16.8" fill="#000" text-anchor="end" >-100</text>
<text transform="matrix(1.06 0 0 1 1790.8 786.8)" font-size="16.8" fill="#000" text-anchor="end" >0,007</text>
<text transform="matrix(0.9 0 0 1 18.6 811.8)" font-size="17.5" fill="#f0f0f0" stroke="#f0f0f0" stroke-width="0.15" text-anchor="middle" >28</text>
<text transform="matrix(1.06 0 0 1 41.6 811.8)" font-size="16.8" fill="#000" >00:00:01</text>
<text transform="matrix(1.06 0 0 1 185.8 811.8)" font-size="16.8" fill="#000" text-anchor="end" >1840,8</text>
<text transform="matrix(1.06 0 0 1 264.8 811.8)" font-size="16.8" fill="#000" text-anchor="end" >1840,6</text>
<text transform="matrix(1.06 0 0 1 329.8 811.8)" font-size="16.8" fill="#000" text-anchor="end" >1334</text>
<text transform="matrix(1.06 0 0 1 394.8 811.8)" font-size="16.8" fill="#000" text-anchor="end" >1292</text>
<text transform="matrix(1.06 0 0 1 499.8 811.8)" font-size="16.8" fill="#000" text-anchor="end" >1841,4</text>
<text transform="matrix(1.06 0 0 1 590.8 811.8)" font-size="16.8" fill="#000" text-anchor="end" >1333,8</text>
<text transform="matrix(1.06 0 0 1 677.8 811.8)" font-size="16.8" fill="#000" text-anchor="end" >1292,1</text>
<text transform="matrix(1.06 0 0 1 798.8 811.8)" font-size="16.8" fill="#000" text-anchor="end" >89</text>
<text transform="matrix(1.06 0 0 1 879.8 811.8)" font-size="16.8" fill="#000" text-anchor="end" >65,2</text>
<text transform="matrix(1.06 0 0 1 945.8 811.8)" font-size="16.8" fill="#000" text-anchor="end" >34,2</text>
<text transform="matrix(1.06 0 0 1 1020.8 811.8)" font-size="16.8" fill="#000" text-anchor="end" >1</text>
<text transform="matrix(1.06 0 0 1 1095.8 811.8)" font-size="16.8" fill="#000" text-anchor="end" >1</text>
<text transform="matrix(1.06 0 0 1 1195.8 811.8)" font-size="16.8" fill="#000" text-anchor="end" >1840,6</text>
<text transform="matrix(1.06 0 0 1 1302.8 811.8)" font-size="16.8" fill="#000" text-anchor="end" >1841,4</text>
<text transform="matrix(1.06 0 0 1 1449.8 811.8)" font-size="16.8" fill="#000" text-anchor="end" >89</text>
<text transform="matrix(1.06 0 0 1 1524.8 811.8)" font-size="16.8" fill="#000" text-anchor="end" >1</text>
<text transform="matrix(1.06 0 0 1 1707.8 811.8)" font-size="16.8" fill="#000" text-anchor="end" >-100</text>
<text transform="matrix(1.06 0 0 1 1790.8 811.8)" font-size="16.8" fill="#000" text-anchor="end" >0,021</text>
<text transform="matrix(0.9 0 0 1 18.6 836.8)" font-size="17.5" fill="#f0f0f0" stroke="#f0f0f0" stroke-width="0.15" text-anchor="middle" >29</text>
<text transform="matrix(1.06 0 0 1 41.6 836.8)" font-size="16.8" fill="#000" >00:00:01</text>
<text transform="matrix(1.06 0 0 1 185.8 836.8)" font-size="16.8" fill="#000" text-anchor="end" >1840,8</text>
<text transform="matrix(1.06 0 0 1 264.8 836.8)" font-size="16.8" fill="#000" text-anchor="end" >1840,5</text>
<text transform="matrix(1.06 0 0 1 329.8 836.8)" font-size="16.8" fill="#000" text-anchor="end" >1334</text>
<text transform="matrix(1.06 0 0 1 394.8 836.8)" font-size="16.8" fill="#000" text-anchor="end" >1292</text>
<text transform="matrix(1.06 0 0 1 499.8 836.8)" font-size="16.8" fill="#000" text-anchor="end" >1840,5</text>
<text transform="matrix(1.06 0 0 1 590.8 836.8)" font-size="16.8" fill="#000" text-anchor="end" >1333,8</text>
<text transform="matrix(1.06 0 0 1 677.8 836.8)" font-size="16.8" fill="#000" text-anchor="end" >1292,1</text>
<text transform="matrix(1.06 0 0 1 798.8 836.8)" font-size="16.8" fill="#000" text-anchor="end" >89</text>
<text transform="matrix(1.06 0 0 1 879.8 836.8)" font-size="16.8" fill="#000" text-anchor="end" >65,2</text>
<text transform="matrix(1.06 0 0 1 945.8 836.8)" font-size="16.8" fill="#000" text-anchor="end" >34,2</text>
<text transform="matrix(1.06 0 0 1 1020.8 836.8)" font-size="16.8" fill="#000" text-anchor="end" >1</text>
<text transform="matrix(1.06 0 0 1 1095.8 836.8)" font-size="16.8" fill="#000" text-anchor="end" >1</text>
<text transform="matrix(1.06 0 0 1 1195.8 836.8)" font-size="16.8" fill="#000" text-anchor="end" >1840,5</text>
<text transform="matrix(1.06 0 0 1 1302.8 836.8)" font-size="16.8" fill="#000" text-anchor="end" >1840,5</text>
<text transform="matrix(1.06 0 0 1 1449.8 836.8)" font-size="16.8" fill="#000" text-anchor="end" >89</text>
<text transform="matrix(1.06 0 0 1 1524.8 836.8)" font-size="16.8" fill="#000" text-anchor="end" >1</text>
<text transform="matrix(1.06 0 0 1 1707.8 836.8)" font-size="16.8" fill="#000" text-anchor="end" >-100</text>
<text transform="matrix(1.06 0 0 1 1790.8 836.8)" font-size="16.8" fill="#000" text-anchor="end" >0,018</text>
<text transform="matrix(0.9 0 0 1 18.6 861.8)" font-size="17.5" fill="#f0f0f0" stroke="#f0f0f0" stroke-width="0.15" text-anchor="middle" >30</text>
<text transform="matrix(1.06 0 0 1 41.6 861.8)" font-size="16.8" fill="#000" >00:00:01</text>
<text transform="matrix(1.06 0 0 1 185.8 861.8)" font-size="16.8" fill="#000" text-anchor="end" >1840,8</text>
<text transform="matrix(1.06 0 0 1 264.8 861.8)" font-size="16.8" fill="#000" text-anchor="end" >1840,6</text>
<text transform="matrix(1.06 0 0 1 329.8 861.8)" font-size="16.8" fill="#000" text-anchor="end" >1334</text>
<text transform="matrix(1.06 0 0 1 394.8 861.8)" font-size="16.8" fill="#000" text-anchor="end" >1292</text>
<text transform="matrix(1.06 0 0 1 499.8 861.8)" font-size="16.8" fill="#000" text-anchor="end" >1840,2</text>
<text transform="matrix(1.06 0 0 1 590.8 861.8)" font-size="16.8" fill="#000" text-anchor="end" >1333,8</text>
<text transform="matrix(1.06 0 0 1 677.8 861.8)" font-size="16.8" fill="#000" text-anchor="end" >1292,2</text>
<text transform="matrix(1.06 0 0 1 798.8 861.8)" font-size="16.8" fill="#000" text-anchor="end" >89</text>
<text transform="matrix(1.06 0 0 1 879.8 861.8)" font-size="16.8" fill="#000" text-anchor="end" >65,2</text>
<text transform="matrix(1.06 0 0 1 945.8 861.8)" font-size="16.8" fill="#000" text-anchor="end" >34,2</text>
<text transform="matrix(1.06 0 0 1 1020.8 861.8)" font-size="16.8" fill="#000" text-anchor="end" >1</text>
<text transform="matrix(1.06 0 0 1 1095.8 861.8)" font-size="16.8" fill="#000" text-anchor="end" >1</text>
<text transform="matrix(1.06 0 0 1 1195.8 861.8)" font-size="16.8" fill="#000" text-anchor="end" >1840,6</text>
<text transform="matrix(1.06 0 0 1 1302.8 861.8)" font-size="16.8" fill="#000" text-anchor="end" >1840,2</text>
<text transform="matrix(1.06 0 0 1 1449.8 861.8)" font-size="16.8" fill="#000" text-anchor="end" >89</text>
<text transform="matrix(1.06 0 0 1 1524.8 861.8)" font-size="16.8" fill="#000" text-anchor="end" >1</text>
<text transform="matrix(1.06 0 0 1 1707.8 861.8)" font-size="16.8" fill="#000" text-anchor="end" >-100</text>
<text transform="matrix(1.06 0 0 1 1790.8 861.8)" font-size="16.8" fill="#000" text-anchor="end" >0</text>
<text transform="matrix(0.9 0 0 1 18.6 886.8)" font-size="17.5" fill="#f0f0f0" stroke="#f0f0f0" stroke-width="0.15" text-anchor="middle" >31</text>
<text transform="matrix(1.06 0 0 1 41.6 886.8)" font-size="16.8" fill="#000" >00:00:01</text>
<text transform="matrix(1.06 0 0 1 185.8 886.8)" font-size="16.8" fill="#000" text-anchor="end" >1840,8</text>
<text transform="matrix(1.06 0 0 1 264.8 886.8)" font-size="16.8" fill="#000" text-anchor="end" >1840,5</text>
<text transform="matrix(1.06 0 0 1 329.8 886.8)" font-size="16.8" fill="#000" text-anchor="end" >1334</text>
<text transform="matrix(1.06 0 0 1 394.8 886.8)" font-size="16.8" fill="#000" text-anchor="end" >1292</text>
<text transform="matrix(1.06 0 0 1 499.8 886.8)" font-size="16.8" fill="#000" text-anchor="end" >1840,3</text>
<text transform="matrix(1.06 0 0 1 590.8 886.8)" font-size="16.8" fill="#000" text-anchor="end" >1333,8</text>
<text transform="matrix(1.06 0 0 1 677.8 886.8)" font-size="16.8" fill="#000" text-anchor="end" >1292,2</text>
<text transform="matrix(1.06 0 0 1 798.8 886.8)" font-size="16.8" fill="#000" text-anchor="end" >89</text>
<text transform="matrix(1.06 0 0 1 879.8 886.8)" font-size="16.8" fill="#000" text-anchor="end" >65,2</text>
<text transform="matrix(1.06 0 0 1 945.8 886.8)" font-size="16.8" fill="#000" text-anchor="end" >34,2</text>
<text transform="matrix(1.06 0 0 1 1020.8 886.8)" font-size="16.8" fill="#000" text-anchor="end" >1</text>
<text transform="matrix(1.06 0 0 1 1095.8 886.8)" font-size="16.8" fill="#000" text-anchor="end" >1</text>
<text transform="matrix(1.06 0 0 1 1195.8 886.8)" font-size="16.8" fill="#000" text-anchor="end" >1840,5</text>
<text transform="matrix(1.06 0 0 1 1302.8 886.8)" font-size="16.8" fill="#000" text-anchor="end" >1840,3</text>
<text transform="matrix(1.06 0 0 1 1449.8 886.8)" font-size="16.8" fill="#000" text-anchor="end" >89</text>
<text transform="matrix(1.06 0 0 1 1524.8 886.8)" font-size="16.8" fill="#000" text-anchor="end" >1</text>
<text transform="matrix(1.06 0 0 1 1707.8 886.8)" font-size="16.8" fill="#000" text-anchor="end" >-100</text>
<text transform="matrix(1.06 0 0 1 1790.8 886.8)" font-size="16.8" fill="#000" text-anchor="end" >0,011</text>
<text transform="matrix(0.9 0 0 1 18.6 911.8)" font-size="17.5" fill="#f0f0f0" stroke="#f0f0f0" stroke-width="0.15" text-anchor="middle" >32</text>
<text transform="matrix(1.06 0 0 1 41.6 911.8)" font-size="16.8" fill="#000" >00:00:01</text>
<text transform="matrix(1.06 0 0 1 185.8 911.8)" font-size="16.8" fill="#000" text-anchor="end" >1840,8</text>
<text transform="matrix(1.06 0 0 1 264.8 911.8)" font-size="16.8" fill="#000" text-anchor="end" >1840,6</text>
<text transform="matrix(1.06 0 0 1 329.8 911.8)" font-size="16.8" fill="#000" text-anchor="end" >1334</text>
<text transform="matrix(1.06 0 0 1 394.8 911.8)" font-size="16.8" fill="#000" text-anchor="end" >1292</text>
<text transform="matrix(1.06 0 0 1 499.8 911.8)" font-size="16.8" fill="#000" text-anchor="end" >1840,3</text>
<text transform="matrix(1.06 0 0 1 590.8 911.8)" font-size="16.8" fill="#000" text-anchor="end" >1333,8</text>
<text transform="matrix(1.06 0 0 1 677.8 911.8)" font-size="16.8" fill="#000" text-anchor="end" >1292,2</text>
<text transform="matrix(1.06 0 0 1 798.8 911.8)" font-size="16.8" fill="#000" text-anchor="end" >89</text>
<text transform="matrix(1.06 0 0 1 879.8 911.8)" font-size="16.8" fill="#000" text-anchor="end" >65,2</text>
<text transform="matrix(1.06 0 0 1 945.8 911.8)" font-size="16.8" fill="#000" text-anchor="end" >34,2</text>
<text transform="matrix(1.06 0 0 1 1020.8 911.8)" font-size="16.8" fill="#000" text-anchor="end" >1</text>
<text transform="matrix(1.06 0 0 1 1095.8 911.8)" font-size="16.8" fill="#000" text-anchor="end" >1</text>
<text transform="matrix(1.06 0 0 1 1195.8 911.8)" font-size="16.8" fill="#000" text-anchor="end" >1840,6</text>
<text transform="matrix(1.06 0 0 1 1302.8 911.8)" font-size="16.8" fill="#000" text-anchor="end" >1840,3</text>
<text transform="matrix(1.06 0 0 1 1449.8 911.8)" font-size="16.8" fill="#000" text-anchor="end" >89</text>
<text transform="matrix(1.06 0 0 1 1524.8 911.8)" font-size="16.8" fill="#000" text-anchor="end" >1</text>
<text transform="matrix(1.06 0 0 1 1707.8 911.8)" font-size="16.8" fill="#000" text-anchor="end" >-100</text>
<text transform="matrix(1.06 0 0 1 1790.8 911.8)" font-size="16.8" fill="#000" text-anchor="end" >0,01</text>
<text transform="matrix(0.9 0 0 1 18.6 936.8)" font-size="17.5" fill="#f0f0f0" stroke="#f0f0f0" stroke-width="0.15" text-anchor="middle" >33</text>
<text transform="matrix(1.06 0 0 1 41.6 936.8)" font-size="16.8" fill="#000" >00:00:01</text>
<text transform="matrix(1.06 0 0 1 185.8 936.8)" font-size="16.8" fill="#000" text-anchor="end" >1840,8</text>
<text transform="matrix(1.06 0 0 1 264.8 936.8)" font-size="16.8" fill="#000" text-anchor="end" >1840,6</text>
<text transform="matrix(1.06 0 0 1 329.8 936.8)" font-size="16.8" fill="#000" text-anchor="end" >1334</text>
<text transform="matrix(1.06 0 0 1 394.8 936.8)" font-size="16.8" fill="#000" text-anchor="end" >1292</text>
<text transform="matrix(1.06 0 0 1 499.8 936.8)" font-size="16.8" fill="#000" text-anchor="end" >1841</text>
<text transform="matrix(1.06 0 0 1 590.8 936.8)" font-size="16.8" fill="#000" text-anchor="end" >1333,8</text>
<text transform="matrix(1.06 0 0 1 677.8 936.8)" font-size="16.8" fill="#000" text-anchor="end" >1292,1</text>
<text transform="matrix(1.06 0 0 1 798.8 936.8)" font-size="16.8" fill="#000" text-anchor="end" >89</text>
<text transform="matrix(1.06 0 0 1 879.8 936.8)" font-size="16.8" fill="#000" text-anchor="end" >65,2</text>
<text transform="matrix(1.06 0 0 1 945.8 936.8)" font-size="16.8" fill="#000" text-anchor="end" >34,2</text>
<text transform="matrix(1.06 0 0 1 1020.8 936.8)" font-size="16.8" fill="#000" text-anchor="end" >1</text>
<text transform="matrix(1.06 0 0 1 1095.8 936.8)" font-size="16.8" fill="#000" text-anchor="end" >1</text>
<text transform="matrix(1.06 0 0 1 1195.8 936.8)" font-size="16.8" fill="#000" text-anchor="end" >1840,6</text>
<text transform="matrix(1.06 0 0 1 1302.8 936.8)" font-size="16.8" fill="#000" text-anchor="end" >1841</text>
<text transform="matrix(1.06 0 0 1 1449.8 936.8)" font-size="16.8" fill="#000" text-anchor="end" >89</text>
<text transform="matrix(1.06 0 0 1 1524.8 936.8)" font-size="16.8" fill="#000" text-anchor="end" >1</text>
<text transform="matrix(1.06 0 0 1 1707.8 936.8)" font-size="16.8" fill="#000" text-anchor="end" >-100</text>
<text transform="matrix(1.06 0 0 1 1790.8 936.8)" font-size="16.8" fill="#000" text-anchor="end" >0,02</text>
<text transform="matrix(0.9 0 0 1 18.6 961.8)" font-size="17.5" fill="#f0f0f0" stroke="#f0f0f0" stroke-width="0.15" text-anchor="middle" >34</text>
<text transform="matrix(1.06 0 0 1 41.6 961.8)" font-size="16.8" fill="#000" >00:00:01</text>
<text transform="matrix(1.06 0 0 1 185.8 961.8)" font-size="16.8" fill="#000" text-anchor="end" >1840,8</text>
<text transform="matrix(1.06 0 0 1 264.8 961.8)" font-size="16.8" fill="#000" text-anchor="end" >1840,7</text>
<text transform="matrix(1.06 0 0 1 329.8 961.8)" font-size="16.8" fill="#000" text-anchor="end" >1334</text>
<text transform="matrix(1.06 0 0 1 394.8 961.8)" font-size="16.8" fill="#000" text-anchor="end" >1292</text>
<text transform="matrix(1.06 0 0 1 499.8 961.8)" font-size="16.8" fill="#000" text-anchor="end" >1841,3</text>
<text transform="matrix(1.06 0 0 1 590.8 961.8)" font-size="16.8" fill="#000" text-anchor="end" >1333,8</text>
<text transform="matrix(1.06 0 0 1 677.8 961.8)" font-size="16.8" fill="#000" text-anchor="end" >1292,1</text>
<text transform="matrix(1.06 0 0 1 798.8 961.8)" font-size="16.8" fill="#000" text-anchor="end" >89</text>
<text transform="matrix(1.06 0 0 1 879.8 961.8)" font-size="16.8" fill="#000" text-anchor="end" >65,2</text>
<text transform="matrix(1.06 0 0 1 945.8 961.8)" font-size="16.8" fill="#000" text-anchor="end" >34,2</text>
<text transform="matrix(1.06 0 0 1 1020.8 961.8)" font-size="16.8" fill="#000" text-anchor="end" >1</text>
<text transform="matrix(1.06 0 0 1 1095.8 961.8)" font-size="16.8" fill="#000" text-anchor="end" >1</text>
<text transform="matrix(1.06 0 0 1 1195.8 961.8)" font-size="16.8" fill="#000" text-anchor="end" >1840,7</text>
<text transform="matrix(1.06 0 0 1 1302.8 961.8)" font-size="16.8" fill="#000" text-anchor="end" >1841,3</text>
<text transform="matrix(1.06 0 0 1 1449.8 961.8)" font-size="16.8" fill="#000" text-anchor="end" >89</text>
<text transform="matrix(1.06 0 0 1 1524.8 961.8)" font-size="16.8" fill="#000" text-anchor="end" >1</text>
<text transform="matrix(1.06 0 0 1 1707.8 961.8)" font-size="16.8" fill="#000" text-anchor="end" >-100</text>
<text transform="matrix(1.06 0 0 1 1790.8 961.8)" font-size="16.8" fill="#000" text-anchor="end" >0,05</text>
<text transform="matrix(0.9 0 0 1 18.6 986.8)" font-size="17.5" fill="#f0f0f0" stroke="#f0f0f0" stroke-width="0.15" text-anchor="middle" >35</text>
<text transform="matrix(1.06 0 0 1 41.6 986.8)" font-size="16.8" fill="#000" >00:00:01</text>
<text transform="matrix(1.06 0 0 1 185.8 986.8)" font-size="16.8" fill="#000" text-anchor="end" >1840,8</text>
<text transform="matrix(1.06 0 0 1 264.8 986.8)" font-size="16.8" fill="#000" text-anchor="end" >1840,3</text>
<text transform="matrix(1.06 0 0 1 329.8 986.8)" font-size="16.8" fill="#000" text-anchor="end" >1334</text>
<text transform="matrix(1.06 0 0 1 394.8 986.8)" font-size="16.8" fill="#000" text-anchor="end" >1292</text>
<text transform="matrix(1.06 0 0 1 499.8 986.8)" font-size="16.8" fill="#000" text-anchor="end" >1840,9</text>
<text transform="matrix(1.06 0 0 1 590.8 986.8)" font-size="16.8" fill="#000" text-anchor="end" >1333,8</text>
<text transform="matrix(1.06 0 0 1 677.8 986.8)" font-size="16.8" fill="#000" text-anchor="end" >1292,1</text>
<text transform="matrix(1.06 0 0 1 798.8 986.8)" font-size="16.8" fill="#000" text-anchor="end" >89</text>
<text transform="matrix(1.06 0 0 1 879.8 986.8)" font-size="16.8" fill="#000" text-anchor="end" >65,2</text>
<text transform="matrix(1.06 0 0 1 945.8 986.8)" font-size="16.8" fill="#000" text-anchor="end" >34,2</text>
<text transform="matrix(1.06 0 0 1 1020.8 986.8)" font-size="16.8" fill="#000" text-anchor="end" >1</text>
<text transform="matrix(1.06 0 0 1 1095.8 986.8)" font-size="16.8" fill="#000" text-anchor="end" >1</text>
<text transform="matrix(1.06 0 0 1 1195.8 986.8)" font-size="16.8" fill="#000" text-anchor="end" >1840,3</text>
<text transform="matrix(1.06 0 0 1 1302.8 986.8)" font-size="16.8" fill="#000" text-anchor="end" >1840,9</text>
<text transform="matrix(1.06 0 0 1 1449.8 986.8)" font-size="16.8" fill="#000" text-anchor="end" >89</text>
<text transform="matrix(1.06 0 0 1 1524.8 986.8)" font-size="16.8" fill="#000" text-anchor="end" >1</text>
<text transform="matrix(1.06 0 0 1 1707.8 986.8)" font-size="16.8" fill="#000" text-anchor="end" >-100</text>
<text transform="matrix(1.06 0 0 1 1790.8 986.8)" font-size="16.8" fill="#000" text-anchor="end" >0,004</text>
</g>
<rect x="-10" y="977.6" width="125" height="10" fill="#2f2f2f" rx="4"/>
<rect x="180" y="977.6" width="1750" height="10" fill="#2f2f2f" rx="4"/>
</svg>
</body></html>
